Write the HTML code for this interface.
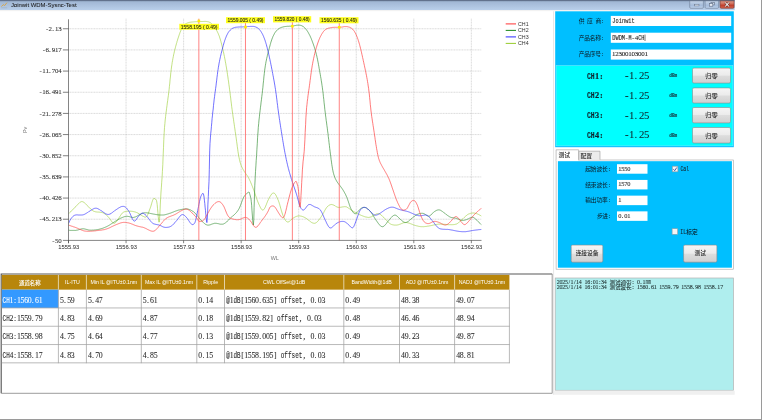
<!DOCTYPE html>
<html lang="zh-CN">
<head>
<meta charset="utf-8">
<title>Joinwit WDM-Sysnc-Test</title>
<style>
html,body{margin:0;padding:0;background:#fff;}
body{width:762px;height:420px;overflow:hidden;position:relative;}
svg{position:absolute;left:0;top:0;display:block;will-change:transform;}
text{font-family:"Liberation Sans","Noto Sans CJK SC",sans-serif;white-space:pre;}
text.m{font-family:"Liberation Mono","Noto Sans CJK SC",monospace;}
text.k{font-family:"Liberation Mono","Noto Sans CJK SC",monospace;}
text.c{font-family:"Liberation Serif","Noto Sans CJK SC",serif;}
</style>
</head>
<body>
<svg width="762" height="420" viewBox="0 0 762 420">
<defs>
<linearGradient id="gt" x1="0" y1="0" x2="0" y2="1"><stop offset="0" stop-color="#98aecb"/><stop offset="0.25" stop-color="#a3b9d6"/><stop offset="1" stop-color="#b9cfea"/></linearGradient>
<linearGradient id="gb" x1="0" y1="0" x2="0" y2="1"><stop offset="0" stop-color="#c6d6ea"/><stop offset="0.5" stop-color="#abc0dc"/><stop offset="0.52" stop-color="#a0b8d8"/><stop offset="1" stop-color="#bfd2ea"/></linearGradient>
<linearGradient id="gc" x1="0" y1="0" x2="0" y2="1"><stop offset="0" stop-color="#dd9c8c"/><stop offset="0.45" stop-color="#cd6552"/><stop offset="0.55" stop-color="#bf3c2a"/><stop offset="1" stop-color="#d2634e"/></linearGradient>
<linearGradient id="gbtn" x1="0" y1="0" x2="0" y2="1"><stop offset="0" stop-color="#f5f5f5"/><stop offset="0.48" stop-color="#ebebeb"/><stop offset="0.52" stop-color="#dddddd"/><stop offset="1" stop-color="#d0d0d0"/></linearGradient>
<clipPath id="cp"><rect x="68.5" y="18.7" width="413" height="221.7"/></clipPath>
</defs>
<rect x="0.00" y="0.00" width="762.00" height="420.00" fill="#ffffff" />
<path d="M761.50 0.00V420.00" stroke="#9a9a9a" stroke-width="1.00" />
<path d="M0.00 419.50H762.00" stroke="#9a9a9a" stroke-width="1.00" />
<rect x="0.00" y="0.00" width="734.70" height="10.00" fill="url(#gt)" />
<rect x="0.00" y="0.00" width="734.70" height="1.15" fill="#62728c" />
<rect x="0.00" y="10.00" width="734.70" height="1.20" fill="#f2f2f2" />
<path d="M1.4 6.6L3.2 4.6L4.6 5.6L7 2.6" stroke="#d9a441" stroke-width="0.9" fill="none"/><path d="M1.2 7.8H7.2" stroke="#9ab" stroke-width="0.5"/>
<text x="10.90" y="7.00" font-size="5.95" fill="#1a1a1a" stroke="#1a1a1a" stroke-width="0.05">Joinwit WDM-Sysnc-Test</text>
<path d="M689.70 0.9V7.2Q689.70 8.3 690.90 8.3H702.20Q703.40 8.3 703.40 7.2V0.9Z" fill="url(#gb)" stroke="#6c7c96" stroke-width="0.6"/>
<path d="M705.10 0.9V7.2Q705.10 8.3 706.30 8.3H717.40Q718.60 8.3 718.60 7.2V0.9Z" fill="url(#gb)" stroke="#6c7c96" stroke-width="0.6"/>
<path d="M720.10 0.9V7.2Q720.10 8.3 721.30 8.3H732.90Q734.10 8.3 734.10 7.2V0.9Z" fill="url(#gc)" stroke="#7a3a32" stroke-width="0.6"/>
<rect x="694.50" y="4.50" width="4.50" height="1.40" fill="#f0f3f8" stroke="#5a6880" stroke-width="0.45"/>
<rect x="711.00" y="2.30" width="3.40" height="2.60" fill="#d4deeb" stroke="#5e6c84" stroke-width="0.6"/>
<rect x="709.40" y="3.60" width="3.40" height="2.60" fill="#e6ecf4" stroke="#5e6c84" stroke-width="0.6"/>
<path d="M725.2 2.5L729 6.5M729 2.5L725.2 6.5" stroke="#6a2f28" stroke-width="1.9"/><path d="M725.2 2.5L729 6.5M729 2.5L725.2 6.5" stroke="#fff" stroke-width="1.05"/>
<path d="M553.60 11.20V394.80" stroke="#e6e6e6" stroke-width="1.00" />
<path d="M68.5 28.75H481.5M68.5 49.91H481.5M68.5 71.08H481.5M68.5 92.25H481.5M68.5 113.41H481.5M68.5 134.57H481.5M68.5 155.74H481.5M68.5 176.91H481.5M68.5 198.07H481.5M68.5 219.23H481.5M126.05 18.7V240.4M183.60 18.7V240.4M241.15 18.7V240.4M298.70 18.7V240.4M356.25 18.7V240.4M413.80 18.7V240.4M471.35 18.7V240.4" stroke="#bdbdbd" stroke-width="0.6" stroke-dasharray="1 0.6" fill="none"/>
<g fill="none" stroke-width="0.75" stroke-linejoin="round" clip-path="url(#cp)">
<path d="M68.6 213.7L69.0 213.4 69.3 213.0 69.7 212.7 70.0 212.3 70.4 212.0 70.7 211.6 71.1 211.3 71.4 210.9 71.8 210.6 72.1 210.2 72.5 209.9 72.8 209.5 73.2 209.2 73.5 208.8 73.9 208.5 74.2 208.1 74.6 207.8 74.9 207.4 75.3 207.1 75.6 206.7 76.0 206.4 76.3 206.0 76.7 205.6 77.0 205.2 77.4 204.8 77.7 204.5 78.1 204.1 78.4 203.7 78.8 203.4 79.1 203.1 79.5 202.8 79.8 202.5 80.2 202.2 80.5 202.0 80.9 201.9 81.2 201.7 81.6 201.6 81.9 201.6 82.3 201.6 82.6 201.7 83.0 201.8 83.3 202.0 83.7 202.2 84.0 202.4 84.4 202.7 84.7 203.0 85.1 203.3 85.4 203.7 85.8 204.0 86.1 204.4 86.5 204.7 86.8 205.1 87.2 205.5 87.5 205.8 87.9 206.1 88.2 206.5 88.6 206.9 88.9 207.2 89.3 207.6 89.6 207.9 90.0 208.3 90.3 208.6 90.7 209.0 91.0 209.3 91.4 209.6 91.7 209.9 92.1 210.2 92.4 210.5 92.8 210.7 93.1 210.9 93.5 211.1 93.8 211.3 94.2 211.4 94.5 211.5 94.9 211.6 95.2 211.7 95.6 211.8 95.9 211.9 96.3 211.9 96.6 212.0 97.0 212.0 97.3 212.0 97.7 212.1 98.0 212.1 98.4 212.1 98.7 212.1 99.1 212.2 99.4 212.2 99.8 212.2 100.1 212.3 100.5 212.3 100.8 212.3 101.2 212.4 101.5 212.5 101.9 212.5 102.2 212.6 102.6 212.7 102.9 212.8 103.3 213.0 103.6 213.1 104.0 213.3 104.3 213.5 104.7 213.8 105.0 214.0 105.4 214.3 105.7 214.5 106.1 214.8 106.4 215.1 106.8 215.4 107.1 215.8 107.5 216.1 107.8 216.5 108.2 216.8 108.5 217.2 108.9 217.6 109.2 218.1 109.6 218.5 109.9 219.0 110.3 219.5 110.6 220.0 111.0 220.5 111.3 221.0 111.7 221.5 112.0 221.9 112.4 222.3 112.7 222.6 113.1 222.9 113.4 223.1 113.8 223.2 114.1 223.3 114.5 223.2 114.8 223.1 115.2 222.9 115.5 222.6 115.9 222.2 116.2 221.8 116.6 221.4 116.9 220.9 117.3 220.4 117.6 219.9 118.0 219.3 118.3 218.8 118.7 218.3 119.0 217.8 119.4 217.3 119.7 216.7 120.1 216.2 120.4 215.7 120.8 215.1 121.1 214.6 121.5 214.2 121.8 213.7 122.2 213.3 122.5 212.9 122.9 212.6 123.2 212.3 123.6 212.1 123.9 212.0 124.3 211.8 124.6 211.7 125.0 211.6 125.3 211.5 125.7 211.5 126.0 211.4 126.4 211.4 126.7 211.3 127.1 211.3 127.4 211.2 127.8 211.2 128.1 211.2 128.5 211.2 128.8 211.2 129.2 211.2 129.5 211.2 129.9 211.2 130.2 211.2 130.6 211.2 130.9 211.3 131.3 211.3 131.6 211.3 132.0 211.4 132.3 211.4 132.7 211.4 133.0 211.5 133.4 211.6 133.7 211.6 134.1 211.7 134.4 211.8 134.8 211.9 135.1 212.0 135.5 212.1 135.8 212.2 136.2 212.3 136.5 212.5 136.9 212.6 137.2 212.8 137.6 212.9 137.9 213.1 138.3 213.3 138.6 213.5 139.0 213.7 139.3 214.0 139.7 214.2 140.0 214.4 140.4 214.7 140.7 214.9 141.1 215.1 141.4 215.4 141.8 215.6 142.1 215.8 142.5 216.0 142.8 216.2 143.2 216.3 143.5 216.5 143.9 216.7 144.2 216.8 144.6 217.0 144.9 217.1 145.3 217.1 145.6 217.1 146.0 217.1 146.3 216.9 146.7 216.5 147.0 216.1 147.4 215.5 147.7 214.7 148.1 213.8 148.4 212.9 148.8 212.0 149.1 211.0 149.5 210.0 149.8 209.1 150.2 208.2 150.5 207.2 150.9 206.2 151.2 205.0 151.6 203.8 151.9 202.6 152.3 201.4 152.6 200.4 153.0 199.6 153.3 199.1 153.7 198.5 154.0 198.1 154.4 198.3 154.7 198.8 155.1 199.0 155.4 199.2 155.8 199.6 156.1 199.6 156.5 200.5 156.8 202.0 157.2 204.6 157.5 208.3 157.9 212.4 158.2 216.3 158.6 219.6 158.9 222.2 159.3 222.0 159.6 218.3 160.0 211.6 160.3 204.1 160.7 197.5 161.0 192.0 161.4 187.1 161.7 182.3 162.1 177.2 162.4 171.5 162.8 164.6 163.1 156.4 163.5 147.7 163.8 139.5 164.2 132.7 164.5 127.5 164.9 123.5 165.2 120.0 165.6 116.7 165.9 113.7 166.3 111.0 166.6 108.4 167.0 105.7 167.3 103.1 167.7 100.6 168.0 98.0 168.4 95.4 168.7 92.7 169.1 89.7 169.4 86.5 169.8 83.1 170.1 79.5 170.5 76.0 170.8 72.6 171.2 69.7 171.5 67.0 171.9 64.7 172.2 62.4 172.6 60.4 172.9 58.5 173.3 56.6 173.6 54.9 174.0 53.3 174.3 51.8 174.7 50.4 175.0 49.0 175.4 47.6 175.7 46.3 176.1 45.0 176.4 43.7 176.8 42.5 177.1 41.3 177.5 40.2 177.8 39.0 178.2 37.9 178.5 36.9 178.9 35.8 179.2 34.8 179.6 33.8 179.9 32.8 180.3 31.9 180.6 31.0 181.0 30.2 181.3 29.4 181.7 28.7 182.0 28.1 182.4 27.5 182.7 27.0 183.1 26.5 183.4 26.0 183.8 25.6 184.1 25.2 184.5 24.8 184.8 24.5 185.2 24.2 185.5 24.0 185.9 23.7 186.2 23.5 186.6 23.3 186.9 23.2 187.3 23.0 187.6 22.9 188.0 22.8 188.3 22.7 188.7 22.6 189.0 22.5 189.4 22.4 189.7 22.3 190.1 22.3 190.4 22.2 190.8 22.2 191.1 22.1 191.5 22.1 191.8 22.0 192.2 22.0 192.5 22.0 192.9 21.9 193.2 21.9 193.6 21.9 193.9 21.8 194.3 21.8 194.6 21.8 195.0 21.8 195.3 21.8 195.7 21.7 196.0 21.7 196.4 21.7 196.7 21.7 197.1 21.7 197.4 21.7 197.8 21.6 198.1 21.6 198.5 21.6 198.8 21.6 199.2 21.6 199.5 21.6 199.9 21.6 200.2 21.6 200.6 21.5 200.9 21.5 201.3 21.5 201.6 21.5 202.0 21.5 202.3 21.5 202.7 21.5 203.0 21.5 203.4 21.5 203.7 21.4 204.1 21.4 204.4 21.4 204.8 21.4 205.1 21.4 205.5 21.4 205.8 21.4 206.2 21.5 206.5 21.5 206.9 21.5 207.2 21.6 207.6 21.7 207.9 21.7 208.3 21.8 208.6 21.9 209.0 22.0 209.3 22.2 209.7 22.3 210.0 22.5 210.4 22.7 210.7 23.0 211.1 23.3 211.4 23.6 211.8 23.9 212.1 24.3 212.5 24.7 212.8 25.1 213.2 25.5 213.5 26.0 213.9 26.4 214.2 26.9 214.6 27.3 214.9 27.8 215.3 28.3 215.6 28.8 216.0 29.3 216.3 29.9 216.7 30.5 217.0 31.1 217.4 31.8 217.7 32.5 218.1 33.3 218.4 34.1 218.8 34.9 219.1 35.8 219.5 36.8 219.8 37.9 220.2 39.0 220.5 40.2 220.9 41.4 221.2 42.7 221.6 44.1 221.9 45.5 222.3 46.9 222.6 48.3 223.0 49.8 223.3 51.4 223.7 53.0 224.0 54.7 224.4 56.4 224.7 58.1 225.1 60.0 225.4 61.9 225.8 63.8 226.1 65.8 226.5 67.9 226.8 70.0 227.2 72.3 227.5 74.6 227.9 77.0 228.2 79.4 228.6 81.9 228.9 84.5 229.3 87.1 229.6 89.8 230.0 92.5 230.3 95.3 230.7 98.1 231.0 101.0 231.4 103.9 231.7 106.7 232.1 109.4 232.4 112.0 232.8 114.6 233.1 117.0 233.5 119.4 233.8 121.8 234.2 124.2 234.5 126.6 234.9 129.0 235.2 131.4 235.6 133.9 235.9 136.3 236.3 138.8 236.6 141.4 237.0 144.0 237.3 146.6 237.7 149.2 238.0 151.7 238.4 154.0 238.7 156.0 239.1 157.8 239.4 159.4 239.8 160.9 240.1 162.2 240.5 163.4 240.8 164.5 241.2 165.4 241.5 166.3 241.9 167.1 242.2 167.8 242.6 168.5 242.9 169.1 243.3 169.8 243.6 170.3 244.0 170.9 244.3 171.5 244.7 172.0 245.0 172.5 245.4 173.0 245.7 173.5 246.1 174.0 246.4 174.5 246.8 175.0 247.1 175.5 247.5 176.0 247.8 176.6 248.2 177.2 248.5 177.8 248.9 178.5 249.2 179.2 249.6 179.9 249.9 180.6 250.3 181.4 250.6 182.2 251.0 183.0 251.3 183.9 251.7 184.7 252.0 185.6 252.4 186.5 252.7 187.4 253.1 188.3 253.4 189.3 253.8 190.2 254.1 191.1 254.5 192.1 254.8 193.1 255.2 194.2 255.5 195.2 255.9 196.2 256.2 197.3 256.6 198.3 256.9 199.3 257.3 200.3 257.6 201.2 258.0 202.1 258.3 203.0 258.7 203.8 259.0 204.6 259.4 205.3 259.7 206.1 260.1 206.8 260.4 207.5 260.8 208.1 261.1 208.7 261.5 209.2 261.8 209.6 262.2 209.8 262.5 210.0 262.9 210.1 263.2 210.0 263.6 209.7 263.9 209.4 264.3 208.9 264.6 208.3 265.0 207.6 265.3 206.9 265.7 206.1 266.0 205.2 266.4 204.4 266.7 203.5 267.1 202.6 267.4 201.7 267.8 200.9 268.1 200.1 268.5 199.4 268.8 198.7 269.2 198.1 269.5 197.4 269.9 196.8 270.2 196.2 270.6 195.6 270.9 195.1 271.3 194.6 271.6 194.1 272.0 193.8 272.3 193.4 272.7 193.2 273.0 193.0 273.4 193.0 273.7 193.0 274.1 193.1 274.4 193.3 274.8 193.6 275.1 194.0 275.5 194.5 275.8 195.0 276.2 195.7 276.5 196.4 276.9 197.1 277.2 197.9 277.6 198.7 277.9 199.6 278.3 200.4 278.6 201.3 279.0 202.3 279.3 203.4 279.7 204.5 280.0 205.7 280.4 207.0 280.7 208.2 281.1 209.5 281.4 210.7 281.8 211.9 282.1 213.0 282.5 214.1 282.8 215.1 283.2 215.9 283.5 216.7 283.9 217.4 284.2 218.1 284.6 218.8 284.9 219.4 285.3 220.0 285.6 220.5 286.0 220.9 286.3 221.3 286.7 221.6 287.0 221.8 287.4 221.9 287.7 222.0 288.1 222.0 288.4 221.9 288.8 221.7 289.1 221.5 289.5 221.3 289.8 221.0 290.2 220.7 290.5 220.3 290.9 220.0 291.2 219.7 291.6 219.3 291.9 219.0 292.3 218.8 292.6 218.5 293.0 218.2 293.3 218.0 293.7 217.8 294.0 217.6 294.4 217.4 294.7 217.2 295.1 217.0 295.4 216.8 295.8 216.7 296.1 216.5 296.5 216.4 296.8 216.3 297.2 216.2 297.5 216.1 297.9 216.0 298.2 216.0 298.6 215.9 298.9 215.9 299.3 215.9 299.6 215.9 300.0 216.0 300.3 216.0 300.7 216.1 301.0 216.1 301.4 216.2 301.7 216.3 302.1 216.4 302.4 216.5 302.8 216.7 303.1 216.8 303.5 216.9 303.8 217.1 304.2 217.2 304.5 217.4 304.9 217.6 305.2 217.8 305.6 218.0 305.9 218.2 306.3 218.4 306.6 218.7 307.0 218.9 307.3 219.2 307.7 219.5 308.0 219.7 308.4 220.0 308.7 220.3 309.1 220.6 309.4 220.9 309.8 221.2 310.1 221.4 310.5 221.7 310.8 221.9 311.2 222.2 311.5 222.4 311.9 222.6 312.2 222.8 312.6 222.9 312.9 223.1 313.3 223.2 313.6 223.2 314.0 223.3 314.3 223.3 314.7 223.3 315.0 223.2 315.4 223.1 315.7 222.9 316.1 222.7 316.4 222.5 316.8 222.2 317.1 221.9 317.5 221.6 317.8 221.2 318.2 220.8 318.5 220.4 318.9 220.0 319.2 219.5 319.6 219.1 319.9 218.6 320.3 218.1 320.6 217.6 321.0 217.1 321.3 216.6 321.7 216.1 322.0 215.5 322.4 214.9 322.7 214.3 323.1 213.7 323.4 213.0 323.8 212.4 324.1 211.7 324.5 211.0 324.8 210.4 325.2 209.8 325.5 209.2 325.9 208.6 326.2 208.0 326.6 207.6 326.9 207.1 327.3 206.7 327.6 206.4 328.0 206.1 328.3 205.8 328.7 205.6 329.0 205.3 329.4 205.1 329.7 205.0 330.1 204.8 330.4 204.7 330.8 204.6 331.1 204.5 331.5 204.5 331.8 204.5 332.2 204.6 332.5 204.7 332.9 204.8 333.2 204.9 333.6 205.1 333.9 205.2 334.3 205.4 334.6 205.6 335.0 205.8 335.3 206.1 335.7 206.3 336.0 206.5 336.4 206.7 336.7 206.8 337.1 207.0 337.4 207.1 337.8 207.3 338.1 207.3 338.5 207.4 338.8 207.4 339.2 207.4 339.5 207.4 339.9 207.4 340.2 207.3 340.6 207.3 340.9 207.2 341.3 207.2 341.6 207.1 342.0 207.1 342.3 207.0 342.7 206.9 343.0 206.9 343.4 206.8 343.7 206.8 344.1 206.7 344.4 206.7 344.8 206.7 345.1 206.7 345.5 206.7 345.8 206.8 346.2 206.8 346.5 206.9 346.9 207.1 347.2 207.3 347.6 207.5 347.9 207.7 348.3 207.9 348.6 208.2 349.0 208.4 349.3 208.7 349.7 209.0 350.0 209.2 350.4 209.5 350.7 209.7 351.1 210.0 351.4 210.2 351.8 210.4 352.1 210.6 352.5 210.8 352.8 211.1 353.2 211.3 353.5 211.5 353.9 211.7 354.2 211.9 354.6 212.1 354.9 212.3 355.3 212.5 355.6 212.7 356.0 212.8 356.3 213.0 356.7 213.2 357.0 213.4 357.4 213.6 357.7 213.7 358.1 213.9 358.4 214.1 358.8 214.2 359.1 214.4 359.5 214.6 359.8 214.7 360.2 214.9 360.5 215.0 360.9 215.2 361.2 215.3 361.6 215.5 361.9 215.6 362.3 215.8 362.6 215.9 363.0 216.1 363.3 216.2 363.7 216.3 364.0 216.4 364.4 216.6 364.7 216.7 365.1 216.8 365.4 216.9 365.8 217.0 366.1 217.1 366.5 217.1 366.8 217.2 367.2 217.3 367.5 217.3 367.9 217.3 368.2 217.4 368.6 217.4 368.9 217.4 369.3 217.3 369.6 217.3 370.0 217.2 370.3 217.1 370.7 217.0 371.0 216.9 371.4 216.8 371.7 216.6 372.1 216.4 372.4 216.2 372.8 216.0 373.1 215.8 373.5 215.6 373.8 215.4 374.2 215.2 374.5 215.0 374.9 214.7 375.2 214.6 375.6 214.4 375.9 214.2 376.3 214.0 376.6 213.9 377.0 213.8 377.3 213.7 377.7 213.7 378.0 213.7 378.4 213.7 378.7 213.7 379.1 213.8 379.4 214.0 379.8 214.1 380.1 214.3 380.5 214.5 380.8 214.8 381.2 215.1 381.5 215.4 381.9 215.7 382.2 216.0 382.6 216.3 382.9 216.7 383.3 217.0 383.6 217.4 384.0 217.7 384.3 218.0 384.7 218.4 385.0 218.7 385.4 219.1 385.7 219.5 386.1 219.8 386.4 220.2 386.8 220.6 387.1 221.0 387.5 221.4 387.8 221.7 388.2 222.1 388.5 222.4 388.9 222.8 389.2 223.1 389.6 223.4 389.9 223.6 390.3 223.9 390.6 224.0 391.0 224.2 391.3 224.4 391.7 224.5 392.0 224.6 392.4 224.7 392.7 224.8 393.1 224.9 393.4 224.9 393.8 225.0 394.1 225.0 394.5 225.1 394.8 225.1 395.2 225.1 395.5 225.1 395.9 225.1 396.2 225.1 396.6 225.1 396.9 225.0 397.3 225.0 397.6 224.9 398.0 224.9 398.3 224.8 398.7 224.7 399.0 224.6 399.4 224.4 399.7 224.3 400.1 224.2 400.4 224.0 400.8 223.9 401.1 223.7 401.5 223.6 401.8 223.5 402.2 223.3 402.5 223.2 402.9 223.1 403.2 222.9 403.6 222.8 403.9 222.7 404.3 222.7 404.6 222.6 405.0 222.5 405.3 222.5 405.7 222.5 406.0 222.5 406.4 222.5 406.7 222.6 407.1 222.6 407.4 222.7 407.8 222.8 408.1 222.8 408.5 223.0 408.8 223.1 409.2 223.2 409.5 223.3 409.9 223.4 410.2 223.6 410.6 223.7 410.9 223.8 411.3 224.0 411.6 224.1 412.0 224.3 412.3 224.4 412.7 224.5 413.0 224.7 413.4 224.8 413.7 224.9 414.1 225.0 414.4 225.2 414.8 225.3 415.1 225.4 415.5 225.5 415.8 225.6 416.2 225.7 416.5 225.8 416.9 225.9 417.2 226.0 417.6 226.0 417.9 226.1 418.3 226.2 418.6 226.3 419.0 226.3 419.3 226.4 419.7 226.5 420.0 226.5 420.4 226.6 420.7 226.6 421.1 226.6 421.4 226.7 421.8 226.7 422.1 226.7 422.5 226.7 422.8 226.7 423.2 226.7 423.5 226.7 423.9 226.7 424.2 226.6 424.6 226.6 424.9 226.6 425.3 226.5 425.6 226.5 426.0 226.5 426.3 226.4 426.7 226.4 427.0 226.3 427.4 226.2 427.7 226.2 428.1 226.1 428.4 226.1 428.8 226.0 429.1 225.9 429.5 225.9 429.8 225.8 430.2 225.8 430.5 225.7 430.9 225.6 431.2 225.6 431.6 225.5 431.9 225.4 432.3 225.3 432.6 225.3 433.0 225.2 433.3 225.1 433.7 225.0 434.0 225.0 434.4 224.9 434.7 224.8 435.1 224.7 435.4 224.7 435.8 224.6 436.1 224.5 436.5 224.5 436.8 224.4 437.2 224.4 437.5 224.3 437.9 224.3 438.2 224.2 438.6 224.2 438.9 224.2 439.3 224.2 439.6 224.2 440.0 224.2 440.3 224.1 440.7 224.1 441.0 224.2 441.4 224.2 441.7 224.2 442.1 224.2 442.4 224.2 442.8 224.2 443.1 224.2 443.5 224.3 443.8 224.3 444.2 224.3 444.5 224.3 444.9 224.4 445.2 224.4 445.6 224.4 445.9 224.5 446.3 224.5 446.6 224.5 447.0 224.5 447.3 224.6 447.7 224.6 448.0 224.6 448.4 224.7 448.7 224.7 449.1 224.7 449.4 224.7 449.8 224.7 450.1 224.7 450.5 224.7 450.8 224.7 451.2 224.7 451.5 224.7 451.9 224.7 452.2 224.7 452.6 224.7 452.9 224.7 453.3 224.7 453.6 224.6 454.0 224.6 454.3 224.5 454.7 224.5 455.0 224.4 455.4 224.3 455.7 224.2 456.1 224.1 456.4 224.0 456.8 223.9 457.1 223.7 457.5 223.5 457.8 223.2 458.2 223.0 458.5 222.7 458.9 222.4 459.2 222.1 459.6 221.8 459.9 221.5 460.3 221.2 460.6 220.9 461.0 220.5 461.3 220.2 461.7 219.9 462.0 219.6 462.4 219.3 462.7 218.9 463.1 218.6 463.4 218.3 463.8 217.9 464.1 217.6 464.5 217.3 464.8 216.9 465.2 216.6 465.5 216.3 465.9 216.0 466.2 215.7 466.6 215.4 466.9 215.1 467.3 214.8 467.6 214.6 468.0 214.4 468.3 214.2 468.7 214.0 469.0 213.9 469.4 213.8 469.7 213.6 470.1 213.5 470.4 213.4 470.8 213.3 471.1 213.2 471.5 213.2 471.8 213.1 472.2 213.1 472.5 213.0 472.9 213.0 473.2 213.0 473.6 213.0 473.9 213.1 474.3 213.1 474.6 213.1 475.0 213.2 475.3 213.3 475.7 213.4 476.0 213.4 476.4 213.6 476.7 213.7 477.1 213.8 477.4 213.9 477.8 214.1 478.1 214.2 478.5 214.4 478.8 214.6 479.2 214.8 479.5 214.9 479.9 215.1 480.2 215.4 480.6 215.6 480.9 215.8 481.3 216.0 481.6 216.2" stroke="#9acd32" opacity="0.8"/>
<path d="M68.6 230.3L69.0 230.3 69.3 230.3 69.7 230.3 70.0 230.3 70.4 230.4 70.7 230.4 71.1 230.4 71.4 230.4 71.8 230.4 72.1 230.4 72.5 230.4 72.8 230.4 73.2 230.4 73.5 230.4 73.9 230.4 74.2 230.4 74.6 230.4 74.9 230.4 75.3 230.4 75.6 230.4 76.0 230.3 76.3 230.3 76.7 230.2 77.0 230.2 77.4 230.1 77.7 230.0 78.1 229.9 78.4 229.8 78.8 229.7 79.1 229.6 79.5 229.5 79.8 229.4 80.2 229.3 80.5 229.2 80.9 229.1 81.2 229.0 81.6 228.9 81.9 228.9 82.3 228.8 82.6 228.8 83.0 228.8 83.3 228.8 83.7 228.8 84.0 228.9 84.4 228.9 84.7 229.0 85.1 229.1 85.4 229.2 85.8 229.2 86.1 229.3 86.5 229.4 86.8 229.5 87.2 229.6 87.5 229.7 87.9 229.8 88.2 229.9 88.6 230.0 88.9 230.0 89.3 230.1 89.6 230.1 90.0 230.1 90.3 230.1 90.7 230.2 91.0 230.2 91.4 230.2 91.7 230.2 92.1 230.2 92.4 230.1 92.8 230.1 93.1 230.1 93.5 230.1 93.8 230.1 94.2 230.0 94.5 230.0 94.9 229.9 95.2 229.9 95.6 229.9 95.9 229.8 96.3 229.8 96.6 229.7 97.0 229.7 97.3 229.6 97.7 229.6 98.0 229.5 98.4 229.4 98.7 229.4 99.1 229.3 99.4 229.2 99.8 229.1 100.1 229.0 100.5 228.9 100.8 228.8 101.2 228.7 101.5 228.6 101.9 228.5 102.2 228.4 102.6 228.3 102.9 228.1 103.3 228.0 103.6 227.9 104.0 227.8 104.3 227.6 104.7 227.5 105.0 227.3 105.4 227.2 105.7 227.0 106.1 226.9 106.4 226.7 106.8 226.6 107.1 226.4 107.5 226.2 107.8 226.0 108.2 225.8 108.5 225.6 108.9 225.4 109.2 225.2 109.6 225.0 109.9 224.8 110.3 224.5 110.6 224.3 111.0 224.1 111.3 223.9 111.7 223.6 112.0 223.4 112.4 223.2 112.7 223.0 113.1 222.7 113.4 222.5 113.8 222.3 114.1 222.1 114.5 221.8 114.8 221.6 115.2 221.4 115.5 221.2 115.9 221.0 116.2 220.8 116.6 220.5 116.9 220.3 117.3 220.1 117.6 219.9 118.0 219.7 118.3 219.5 118.7 219.3 119.0 219.1 119.4 218.9 119.7 218.7 120.1 218.5 120.4 218.3 120.8 218.1 121.1 218.0 121.5 217.8 121.8 217.7 122.2 217.5 122.5 217.4 122.9 217.2 123.2 217.1 123.6 217.0 123.9 216.9 124.3 216.8 124.6 216.6 125.0 216.6 125.3 216.5 125.7 216.4 126.0 216.4 126.4 216.3 126.7 216.3 127.1 216.3 127.4 216.3 127.8 216.4 128.1 216.4 128.5 216.5 128.8 216.5 129.2 216.6 129.5 216.7 129.9 216.8 130.2 216.9 130.6 217.0 130.9 217.1 131.3 217.2 131.6 217.2 132.0 217.3 132.3 217.4 132.7 217.4 133.0 217.4 133.4 217.4 133.7 217.4 134.1 217.3 134.4 217.2 134.8 217.1 135.1 217.0 135.5 216.9 135.8 216.7 136.2 216.5 136.5 216.4 136.9 216.2 137.2 216.0 137.6 215.8 137.9 215.6 138.3 215.4 138.6 215.2 139.0 215.0 139.3 214.8 139.7 214.7 140.0 214.5 140.4 214.3 140.7 214.1 141.1 213.9 141.4 213.8 141.8 213.6 142.1 213.5 142.5 213.3 142.8 213.2 143.2 213.1 143.5 213.0 143.9 212.9 144.2 212.8 144.6 212.8 144.9 212.8 145.3 212.8 145.6 212.8 146.0 212.8 146.3 212.8 146.7 212.8 147.0 212.9 147.4 212.9 147.7 212.9 148.1 213.0 148.4 213.1 148.8 213.1 149.1 213.2 149.5 213.2 149.8 213.3 150.2 213.4 150.5 213.5 150.9 213.5 151.2 213.6 151.6 213.7 151.9 213.7 152.3 213.8 152.6 213.9 153.0 213.9 153.3 214.0 153.7 214.1 154.0 214.1 154.4 214.2 154.7 214.3 155.1 214.3 155.4 214.4 155.8 214.5 156.1 214.5 156.5 214.6 156.8 214.6 157.2 214.7 157.5 214.7 157.9 214.8 158.2 214.8 158.6 214.9 158.9 214.9 159.3 214.9 159.6 215.0 160.0 215.0 160.3 215.0 160.7 215.0 161.0 215.0 161.4 215.0 161.7 215.0 162.1 215.0 162.4 215.0 162.8 215.0 163.1 215.0 163.5 215.0 163.8 214.9 164.2 214.9 164.5 214.8 164.9 214.8 165.2 214.7 165.6 214.6 165.9 214.5 166.3 214.4 166.6 214.3 167.0 214.2 167.3 214.1 167.7 214.0 168.0 213.9 168.4 213.8 168.7 213.7 169.1 213.6 169.4 213.4 169.8 213.3 170.1 213.2 170.5 213.1 170.8 213.0 171.2 212.8 171.5 212.7 171.9 212.6 172.2 212.4 172.6 212.3 172.9 212.2 173.3 212.0 173.6 211.9 174.0 211.7 174.3 211.6 174.7 211.4 175.0 211.3 175.4 211.2 175.7 211.0 176.1 210.9 176.4 210.8 176.8 210.7 177.1 210.6 177.5 210.4 177.8 210.3 178.2 210.2 178.5 210.1 178.9 210.0 179.2 210.0 179.6 209.9 179.9 209.8 180.3 209.7 180.6 209.6 181.0 209.5 181.3 209.5 181.7 209.4 182.0 209.3 182.4 209.3 182.7 209.2 183.1 209.1 183.4 209.1 183.8 209.1 184.1 209.0 184.5 209.0 184.8 209.0 185.2 208.9 185.5 208.9 185.9 208.9 186.2 208.9 186.6 208.9 186.9 209.0 187.3 209.0 187.6 209.0 188.0 209.1 188.3 209.2 188.7 209.3 189.0 209.4 189.4 209.5 189.7 209.6 190.1 209.8 190.4 209.9 190.8 210.1 191.1 210.3 191.5 210.5 191.8 210.7 192.2 210.9 192.5 211.1 192.9 211.3 193.2 211.6 193.6 211.8 193.9 212.1 194.3 212.4 194.6 212.7 195.0 213.0 195.3 213.4 195.7 213.8 196.0 214.2 196.4 214.6 196.7 215.0 197.1 215.4 197.4 215.9 197.8 216.3 198.1 216.8 198.5 217.2 198.8 217.6 199.2 218.1 199.5 218.5 199.9 218.9 200.2 219.3 200.6 219.7 200.9 220.1 201.3 220.4 201.6 220.8 202.0 221.2 202.3 221.5 202.7 221.9 203.0 222.2 203.4 222.6 203.7 222.9 204.1 223.2 204.4 223.5 204.8 223.8 205.1 224.0 205.5 224.3 205.8 224.5 206.2 224.6 206.5 224.8 206.9 224.9 207.2 225.0 207.6 225.1 207.9 225.1 208.3 225.1 208.6 225.1 209.0 225.0 209.3 225.0 209.7 224.9 210.0 224.8 210.4 224.7 210.7 224.6 211.1 224.4 211.4 224.3 211.8 224.2 212.1 224.1 212.5 223.9 212.8 223.8 213.2 223.7 213.5 223.6 213.9 223.5 214.2 223.4 214.6 223.3 214.9 223.3 215.3 223.3 215.6 223.3 216.0 223.3 216.3 223.3 216.7 223.4 217.0 223.4 217.4 223.5 217.7 223.6 218.1 223.6 218.4 223.7 218.8 223.8 219.1 223.9 219.5 224.0 219.8 224.0 220.2 224.1 220.5 224.2 220.9 224.2 221.2 224.2 221.6 224.2 221.9 224.2 222.3 224.2 222.6 224.2 223.0 224.1 223.3 224.0 223.7 223.9 224.0 223.7 224.4 223.5 224.7 223.3 225.1 223.1 225.4 222.9 225.8 222.6 226.1 222.3 226.5 222.0 226.8 221.7 227.2 221.4 227.5 221.0 227.9 220.7 228.2 220.3 228.6 220.0 228.9 219.6 229.3 219.2 229.6 218.9 230.0 218.5 230.3 218.2 230.7 217.8 231.0 217.5 231.4 217.2 231.7 216.9 232.1 216.6 232.4 216.3 232.8 216.0 233.1 215.7 233.5 215.4 233.8 215.1 234.2 214.8 234.5 214.5 234.9 214.1 235.2 213.8 235.6 213.4 235.9 213.1 236.3 212.7 236.6 212.3 237.0 211.8 237.3 211.4 237.7 210.9 238.0 210.4 238.4 209.8 238.7 209.2 239.1 208.6 239.4 207.9 239.8 207.1 240.1 206.3 240.5 205.4 240.8 204.5 241.2 203.5 241.5 202.6 241.9 201.6 242.2 200.7 242.6 199.8 242.9 198.9 243.3 198.1 243.6 197.3 244.0 196.7 244.3 196.1 244.7 195.6 245.0 195.2 245.4 194.9 245.7 194.5 246.1 194.2 246.4 193.8 246.8 193.5 247.1 193.2 247.5 192.9 247.8 192.7 248.2 192.5 248.5 192.2 248.9 191.9 249.2 192.2 249.6 193.5 249.9 194.6 250.3 196.0 250.6 197.5 251.0 198.9 251.3 201.7 251.7 205.7 252.0 210.8 252.4 216.0 252.7 220.6 253.1 223.9 253.4 225.0 253.8 219.6 254.1 207.5 254.5 195.0 254.8 185.3 255.2 177.9 255.5 171.6 255.9 165.9 256.2 160.6 256.6 155.3 256.9 149.5 257.3 143.3 257.6 137.3 258.0 132.0 258.3 127.4 258.7 123.5 259.0 120.0 259.4 116.8 259.7 113.7 260.1 110.7 260.4 107.8 260.8 105.0 261.1 102.1 261.5 99.3 261.8 96.5 262.2 93.6 262.5 90.5 262.9 87.3 263.2 83.9 263.6 80.4 263.9 76.9 264.3 73.6 264.6 70.6 265.0 68.0 265.3 65.8 265.7 63.7 266.0 61.8 266.4 60.1 266.7 58.4 267.1 56.9 267.4 55.4 267.8 54.0 268.1 52.6 268.5 51.3 268.8 50.0 269.2 48.6 269.5 47.3 269.9 46.0 270.2 44.7 270.6 43.4 270.9 42.2 271.3 41.1 271.6 40.0 272.0 39.1 272.3 38.1 272.7 37.3 273.0 36.4 273.4 35.7 273.7 35.0 274.1 34.3 274.4 33.6 274.8 33.0 275.1 32.5 275.5 32.0 275.8 31.5 276.2 31.1 276.5 30.7 276.9 30.4 277.2 30.0 277.6 29.7 277.9 29.4 278.3 29.1 278.6 28.9 279.0 28.6 279.3 28.4 279.7 28.2 280.0 28.0 280.4 27.8 280.7 27.7 281.1 27.5 281.4 27.4 281.8 27.3 282.1 27.2 282.5 27.1 282.8 27.0 283.2 26.9 283.5 26.8 283.9 26.8 284.2 26.7 284.6 26.6 284.9 26.6 285.3 26.5 285.6 26.5 286.0 26.5 286.3 26.4 286.7 26.4 287.0 26.4 287.4 26.3 287.7 26.3 288.1 26.3 288.4 26.3 288.8 26.3 289.1 26.3 289.5 26.2 289.8 26.2 290.2 26.2 290.5 26.2 290.9 26.2 291.2 26.1 291.6 26.1 291.9 26.1 292.3 26.0 292.6 26.0 293.0 25.9 293.3 25.9 293.7 25.8 294.0 25.7 294.4 25.7 294.7 25.6 295.1 25.5 295.4 25.5 295.8 25.4 296.1 25.3 296.5 25.3 296.8 25.2 297.2 25.2 297.5 25.2 297.9 25.1 298.2 25.1 298.6 25.1 298.9 25.1 299.3 25.1 299.6 25.2 300.0 25.2 300.3 25.3 300.7 25.4 301.0 25.5 301.4 25.6 301.7 25.7 302.1 25.9 302.4 26.1 302.8 26.3 303.1 26.5 303.5 26.7 303.8 27.0 304.2 27.3 304.5 27.7 304.9 28.0 305.2 28.4 305.6 28.8 305.9 29.2 306.3 29.6 306.6 30.1 307.0 30.6 307.3 31.1 307.7 31.6 308.0 32.2 308.4 32.7 308.7 33.4 309.1 34.0 309.4 34.7 309.8 35.4 310.1 36.1 310.5 36.9 310.8 37.7 311.2 38.5 311.5 39.4 311.9 40.3 312.2 41.2 312.6 42.2 312.9 43.1 313.3 44.1 313.6 45.1 314.0 46.2 314.3 47.2 314.7 48.3 315.0 49.5 315.4 50.7 315.7 51.9 316.1 53.2 316.4 54.6 316.8 56.1 317.1 57.6 317.5 59.2 317.8 61.0 318.2 62.8 318.5 64.7 318.9 66.7 319.2 68.7 319.6 70.6 319.9 72.6 320.3 74.6 320.6 76.6 321.0 78.7 321.3 80.8 321.7 83.0 322.0 85.3 322.4 87.8 322.7 90.4 323.1 93.2 323.4 96.3 323.8 99.5 324.1 102.8 324.5 106.1 324.8 109.3 325.2 112.2 325.5 115.0 325.9 117.8 326.2 120.4 326.6 123.0 326.9 125.6 327.3 128.2 327.6 130.9 328.0 133.7 328.3 136.6 328.7 139.5 329.0 142.5 329.4 145.5 329.7 148.5 330.1 151.3 330.4 154.1 330.8 156.8 331.1 159.5 331.5 162.1 331.8 164.5 332.2 166.8 332.5 168.8 332.9 170.7 333.2 172.2 333.6 173.6 333.9 174.8 334.3 175.9 334.6 176.9 335.0 177.8 335.3 178.6 335.7 179.3 336.0 180.0 336.4 180.6 336.7 181.2 337.1 181.8 337.4 182.3 337.8 182.9 338.1 183.3 338.5 183.8 338.8 184.3 339.2 184.7 339.5 185.2 339.9 185.6 340.2 186.1 340.6 186.5 340.9 187.0 341.3 187.5 341.6 188.0 342.0 188.5 342.3 189.0 342.7 189.5 343.0 190.1 343.4 190.6 343.7 191.2 344.1 191.8 344.4 192.4 344.8 193.1 345.1 193.7 345.5 194.4 345.8 195.1 346.2 195.9 346.5 196.7 346.9 197.5 347.2 198.4 347.6 199.4 347.9 200.4 348.3 201.4 348.6 202.5 349.0 203.5 349.3 204.6 349.7 205.6 350.0 206.6 350.4 207.5 350.7 208.3 351.1 209.0 351.4 209.7 351.8 210.3 352.1 210.9 352.5 211.5 352.8 212.0 353.2 212.4 353.5 212.8 353.9 213.1 354.2 213.4 354.6 213.6 354.9 213.7 355.3 213.7 355.6 213.6 356.0 213.4 356.3 213.2 356.7 212.9 357.0 212.6 357.4 212.2 357.7 211.8 358.1 211.4 358.4 211.0 358.8 210.5 359.1 210.1 359.5 209.7 359.8 209.4 360.2 209.1 360.5 208.8 360.9 208.5 361.2 208.3 361.6 208.1 361.9 207.9 362.3 207.8 362.6 207.6 363.0 207.5 363.3 207.5 363.7 207.4 364.0 207.4 364.4 207.4 364.7 207.4 365.1 207.4 365.4 207.5 365.8 207.7 366.1 207.8 366.5 208.0 366.8 208.2 367.2 208.5 367.5 208.7 367.9 209.0 368.2 209.3 368.6 209.6 368.9 210.0 369.3 210.3 369.6 210.7 370.0 211.0 370.3 211.4 370.7 211.9 371.0 212.3 371.4 212.8 371.7 213.3 372.1 213.9 372.4 214.4 372.8 215.0 373.1 215.5 373.5 216.1 373.8 216.7 374.2 217.3 374.5 217.8 374.9 218.4 375.2 219.0 375.6 219.5 375.9 220.0 376.3 220.5 376.6 221.0 377.0 221.5 377.3 222.0 377.7 222.5 378.0 223.0 378.4 223.5 378.7 223.9 379.1 224.4 379.4 224.8 379.8 225.2 380.1 225.5 380.5 225.8 380.8 226.1 381.2 226.3 381.5 226.5 381.9 226.6 382.2 226.7 382.6 226.7 382.9 226.6 383.3 226.5 383.6 226.3 384.0 226.1 384.3 225.8 384.7 225.5 385.0 225.1 385.4 224.7 385.7 224.3 386.1 223.9 386.4 223.4 386.8 223.0 387.1 222.5 387.5 222.0 387.8 221.6 388.2 221.1 388.5 220.7 388.9 220.3 389.2 219.9 389.6 219.5 389.9 219.0 390.3 218.6 390.6 218.2 391.0 217.8 391.3 217.4 391.7 217.1 392.0 216.7 392.4 216.4 392.7 216.1 393.1 215.8 393.4 215.6 393.8 215.4 394.1 215.3 394.5 215.2 394.8 215.1 395.2 215.2 395.5 215.2 395.9 215.4 396.2 215.5 396.6 215.8 396.9 216.0 397.3 216.3 397.6 216.6 398.0 217.0 398.3 217.3 398.7 217.7 399.0 218.1 399.4 218.4 399.7 218.8 400.1 219.1 400.4 219.4 400.8 219.7 401.1 220.0 401.5 220.3 401.8 220.6 402.2 220.9 402.5 221.2 402.9 221.5 403.2 221.7 403.6 221.9 403.9 222.1 404.3 222.2 404.6 222.4 405.0 222.4 405.3 222.5 405.7 222.5 406.0 222.4 406.4 222.4 406.7 222.2 407.1 222.1 407.4 221.9 407.8 221.7 408.1 221.4 408.5 221.2 408.8 220.9 409.2 220.6 409.5 220.3 409.9 220.0 410.2 219.7 410.6 219.4 410.9 219.1 411.3 218.8 411.6 218.5 412.0 218.2 412.3 217.9 412.7 217.7 413.0 217.4 413.4 217.1 413.7 216.8 414.1 216.6 414.4 216.3 414.8 216.0 415.1 215.8 415.5 215.5 415.8 215.3 416.2 215.1 416.5 214.9 416.9 214.7 417.2 214.5 417.6 214.3 417.9 214.2 418.3 214.1 418.6 213.9 419.0 213.8 419.3 213.7 419.7 213.6 420.0 213.6 420.4 213.5 420.7 213.4 421.1 213.4 421.4 213.3 421.8 213.3 422.1 213.3 422.5 213.3 422.8 213.4 423.2 213.4 423.5 213.5 423.9 213.6 424.2 213.8 424.6 214.0 424.9 214.2 425.3 214.4 425.6 214.7 426.0 215.0 426.3 215.2 426.7 215.5 427.0 215.7 427.4 215.9 427.7 216.0 428.1 216.1 428.4 216.2 428.8 216.2 429.1 216.1 429.5 216.0 429.8 215.8 430.2 215.6 430.5 215.3 430.9 215.0 431.2 214.6 431.6 214.3 431.9 213.9 432.3 213.5 432.6 213.2 433.0 212.8 433.3 212.5 433.7 212.2 434.0 211.9 434.4 211.7 434.7 211.4 435.1 211.2 435.4 211.0 435.8 210.8 436.1 210.6 436.5 210.4 436.8 210.3 437.2 210.2 437.5 210.0 437.9 210.0 438.2 209.9 438.6 209.9 438.9 209.9 439.3 209.9 439.6 210.0 440.0 210.1 440.3 210.2 440.7 210.4 441.0 210.6 441.4 210.8 441.7 211.0 442.1 211.2 442.4 211.5 442.8 211.8 443.1 212.0 443.5 212.3 443.8 212.6 444.2 212.9 444.5 213.1 444.9 213.4 445.2 213.6 445.6 213.9 445.9 214.2 446.3 214.5 446.6 214.7 447.0 215.0 447.3 215.3 447.7 215.5 448.0 215.8 448.4 216.0 448.7 216.2 449.1 216.5 449.4 216.7 449.8 216.8 450.1 217.0 450.5 217.2 450.8 217.3 451.2 217.4 451.5 217.5 451.9 217.6 452.2 217.6 452.6 217.7 452.9 217.8 453.3 217.8 453.6 217.9 454.0 217.9 454.3 218.0 454.7 218.0 455.0 218.1 455.4 218.2 455.7 218.2 456.1 218.3 456.4 218.4 456.8 218.5 457.1 218.7 457.5 218.8 457.8 218.9 458.2 219.1 458.5 219.2 458.9 219.4 459.2 219.5 459.6 219.7 459.9 219.8 460.3 219.9 460.6 220.1 461.0 220.2 461.3 220.2 461.7 220.3 462.0 220.4 462.4 220.4 462.7 220.4 463.1 220.4 463.4 220.4 463.8 220.3 464.1 220.3 464.5 220.2 464.8 220.1 465.2 220.0 465.5 219.9 465.9 219.8 466.2 219.7 466.6 219.6 466.9 219.4 467.3 219.3 467.6 219.1 468.0 219.0 468.3 218.8 468.7 218.7 469.0 218.5 469.4 218.3 469.7 218.1 470.1 218.0 470.4 217.8 470.8 217.6 471.1 217.5 471.5 217.4 471.8 217.3 472.2 217.2 472.5 217.2 472.9 217.3 473.2 217.3 473.6 217.5 473.9 217.7 474.3 217.9 474.6 218.2 475.0 218.5 475.3 218.8 475.7 219.1 476.0 219.5 476.4 219.8 476.7 220.2 477.1 220.5 477.4 220.8 477.8 221.2 478.1 221.5 478.5 221.8 478.8 222.2 479.2 222.5 479.5 222.9 479.9 223.2 480.2 223.6 480.6 224.0 480.9 224.3 481.3 224.7 481.6 225.0" stroke="#2e8b2e" opacity="0.85"/>
<path d="M68.6 223.3L69.0 222.5 69.3 221.8 69.7 221.0 70.0 220.3 70.4 219.7 70.7 219.1 71.1 218.6 71.4 218.1 71.8 217.7 72.1 217.3 72.5 216.9 72.8 216.5 73.2 216.2 73.5 215.9 73.9 215.7 74.2 215.5 74.6 215.3 74.9 215.2 75.3 215.1 75.6 215.0 76.0 215.0 76.3 214.9 76.7 214.9 77.0 214.9 77.4 214.9 77.7 214.9 78.1 214.9 78.4 215.0 78.8 215.0 79.1 215.0 79.5 215.0 79.8 215.0 80.2 215.0 80.5 215.0 80.9 215.0 81.2 215.0 81.6 215.0 81.9 215.0 82.3 215.0 82.6 214.9 83.0 214.9 83.3 214.8 83.7 214.6 84.0 214.5 84.4 214.4 84.7 214.2 85.1 214.0 85.4 213.8 85.8 213.6 86.1 213.4 86.5 213.2 86.8 213.0 87.2 212.8 87.5 212.5 87.9 212.3 88.2 212.1 88.6 211.9 88.9 211.6 89.3 211.4 89.6 211.2 90.0 211.0 90.3 210.7 90.7 210.5 91.0 210.3 91.4 210.0 91.7 209.8 92.1 209.6 92.4 209.4 92.8 209.2 93.1 209.0 93.5 208.8 93.8 208.7 94.2 208.5 94.5 208.4 94.9 208.3 95.2 208.3 95.6 208.2 95.9 208.2 96.3 208.2 96.6 208.3 97.0 208.4 97.3 208.5 97.7 208.6 98.0 208.8 98.4 209.0 98.7 209.1 99.1 209.3 99.4 209.6 99.8 209.8 100.1 210.0 100.5 210.2 100.8 210.5 101.2 210.7 101.5 210.9 101.9 211.2 102.2 211.4 102.6 211.6 102.9 211.9 103.3 212.2 103.6 212.4 104.0 212.7 104.3 212.9 104.7 213.1 105.0 213.4 105.4 213.6 105.7 213.8 106.1 213.9 106.4 214.1 106.8 214.2 107.1 214.3 107.5 214.4 107.8 214.4 108.2 214.5 108.5 214.4 108.9 214.4 109.2 214.3 109.6 214.2 109.9 214.0 110.3 213.9 110.6 213.7 111.0 213.5 111.3 213.2 111.7 213.0 112.0 212.8 112.4 212.5 112.7 212.2 113.1 212.0 113.4 211.7 113.8 211.4 114.1 211.1 114.5 210.9 114.8 210.6 115.2 210.4 115.5 210.1 115.9 209.9 116.2 209.6 116.6 209.4 116.9 209.1 117.3 208.9 117.6 208.7 118.0 208.4 118.3 208.2 118.7 208.0 119.0 207.8 119.4 207.6 119.7 207.4 120.1 207.2 120.4 207.0 120.8 206.9 121.1 206.7 121.5 206.6 121.8 206.5 122.2 206.5 122.5 206.4 122.9 206.4 123.2 206.4 123.6 206.4 123.9 206.5 124.3 206.6 124.6 206.7 125.0 206.9 125.3 207.1 125.7 207.4 126.0 207.7 126.4 208.0 126.7 208.4 127.1 208.8 127.4 209.3 127.8 209.7 128.1 210.2 128.5 210.7 128.8 211.2 129.2 211.8 129.5 212.5 129.9 213.2 130.2 214.0 130.6 214.8 130.9 215.6 131.3 216.4 131.6 217.2 132.0 218.0 132.3 218.7 132.7 219.4 133.0 219.9 133.4 220.4 133.7 220.8 134.1 221.0 134.4 221.1 134.8 221.0 135.1 220.8 135.5 220.5 135.8 220.1 136.2 219.7 136.5 219.1 136.9 218.6 137.2 218.1 137.6 217.5 137.9 217.0 138.3 216.6 138.6 216.2 139.0 215.7 139.3 215.3 139.7 215.0 140.0 214.6 140.4 214.3 140.7 214.0 141.1 213.7 141.4 213.5 141.8 213.3 142.1 213.2 142.5 213.2 142.8 213.2 143.2 213.3 143.5 213.4 143.9 213.6 144.2 213.8 144.6 214.1 144.9 214.4 145.3 214.7 145.6 215.0 146.0 215.4 146.3 215.8 146.7 216.2 147.0 216.6 147.4 217.0 147.7 217.4 148.1 217.8 148.4 218.3 148.8 218.8 149.1 219.2 149.5 219.7 149.8 220.2 150.2 220.6 150.5 221.1 150.9 221.5 151.2 221.9 151.6 222.3 151.9 222.6 152.3 222.9 152.6 223.2 153.0 223.4 153.3 223.6 153.7 223.8 154.0 223.9 154.4 224.0 154.7 224.1 155.1 224.2 155.4 224.3 155.8 224.4 156.1 224.5 156.5 224.5 156.8 224.6 157.2 224.7 157.5 224.7 157.9 224.8 158.2 224.9 158.6 224.9 158.9 225.0 159.3 225.1 159.6 225.3 160.0 225.4 160.3 225.5 160.7 225.7 161.0 225.9 161.4 226.0 161.7 226.2 162.1 226.4 162.4 226.6 162.8 226.7 163.1 226.9 163.5 227.0 163.8 227.1 164.2 227.2 164.5 227.3 164.9 227.3 165.2 227.4 165.6 227.4 165.9 227.4 166.3 227.4 166.6 227.4 167.0 227.4 167.3 227.3 167.7 227.3 168.0 227.2 168.4 227.2 168.7 227.1 169.1 227.0 169.4 226.9 169.8 226.8 170.1 226.6 170.5 226.5 170.8 226.3 171.2 226.1 171.5 225.9 171.9 225.6 172.2 225.3 172.6 225.0 172.9 224.7 173.3 224.4 173.6 224.0 174.0 223.6 174.3 223.2 174.7 222.9 175.0 222.4 175.4 222.0 175.7 221.6 176.1 221.2 176.4 220.8 176.8 220.4 177.1 219.9 177.5 219.5 177.8 219.0 178.2 218.5 178.5 218.0 178.9 217.6 179.2 217.1 179.6 216.7 179.9 216.2 180.3 215.9 180.6 215.5 181.0 215.2 181.3 215.0 181.7 214.8 182.0 214.7 182.4 214.6 182.7 214.6 183.1 214.7 183.4 214.9 183.8 215.0 184.1 215.2 184.5 215.5 184.8 215.8 185.2 216.1 185.5 216.4 185.9 216.8 186.2 217.2 186.6 217.6 186.9 218.0 187.3 218.4 187.6 218.9 188.0 219.4 188.3 219.9 188.7 220.5 189.0 221.0 189.4 221.6 189.7 222.1 190.1 222.6 190.4 223.0 190.8 223.5 191.1 223.8 191.5 224.1 191.8 224.4 192.2 224.5 192.5 224.6 192.9 224.6 193.2 224.5 193.6 224.3 193.9 224.0 194.3 223.5 194.6 223.0 195.0 222.4 195.3 221.5 195.7 220.3 196.0 218.9 196.4 217.3 196.7 215.6 197.1 213.8 197.4 212.0 197.8 210.3 198.1 208.5 198.5 206.7 198.8 204.9 199.2 203.1 199.5 201.4 199.9 199.9 200.2 198.5 200.6 197.3 200.9 196.3 201.3 195.5 201.6 194.8 202.0 194.2 202.3 193.7 202.7 193.4 203.0 193.3 203.4 193.7 203.7 195.0 204.1 197.2 204.4 200.2 204.8 203.6 205.1 207.1 205.5 210.7 205.8 214.3 206.2 218.0 206.5 221.0 206.9 222.6 207.2 219.8 207.6 213.3 207.9 204.2 208.3 196.5 208.6 189.3 209.0 181.3 209.3 169.8 209.7 150.9 210.0 143.3 210.4 137.9 210.7 133.8 211.1 130.2 211.4 126.7 211.8 122.3 212.1 118.6 212.5 115.1 212.8 111.9 213.2 109.0 213.5 105.4 213.9 102.1 214.2 99.1 214.6 96.4 214.9 93.7 215.3 91.2 215.6 88.6 216.0 85.9 216.3 83.1 216.7 80.2 217.0 77.3 217.4 74.5 217.7 71.8 218.1 69.4 218.4 67.2 218.8 65.1 219.1 63.1 219.5 61.3 219.8 59.6 220.2 57.9 220.5 56.4 220.9 54.9 221.2 53.4 221.6 52.0 221.9 50.6 222.3 49.3 222.6 47.9 223.0 46.6 223.3 45.3 223.7 44.0 224.0 42.8 224.4 41.7 224.7 40.6 225.1 39.6 225.4 38.6 225.8 37.7 226.1 36.8 226.5 36.0 226.8 35.2 227.2 34.5 227.5 33.8 227.9 33.2 228.2 32.6 228.6 32.1 228.9 31.6 229.3 31.2 229.6 30.8 230.0 30.4 230.3 30.0 230.7 29.7 231.0 29.4 231.4 29.1 231.7 28.8 232.1 28.6 232.4 28.4 232.8 28.2 233.1 28.0 233.5 27.9 233.8 27.8 234.2 27.7 234.5 27.6 234.9 27.5 235.2 27.4 235.6 27.3 235.9 27.3 236.3 27.2 236.6 27.2 237.0 27.1 237.3 27.1 237.7 27.1 238.0 27.0 238.4 27.0 238.7 27.0 239.1 27.0 239.4 27.0 239.8 26.9 240.1 26.9 240.5 26.9 240.8 26.9 241.2 26.9 241.5 26.9 241.9 26.9 242.2 26.9 242.6 26.9 242.9 26.9 243.3 26.9 243.6 26.8 244.0 26.8 244.3 26.8 244.7 26.8 245.0 26.8 245.4 26.8 245.7 26.7 246.1 26.7 246.4 26.7 246.8 26.7 247.1 26.6 247.5 26.6 247.8 26.6 248.2 26.6 248.5 26.5 248.9 26.5 249.2 26.5 249.6 26.5 249.9 26.4 250.3 26.4 250.6 26.4 251.0 26.4 251.3 26.4 251.7 26.4 252.0 26.4 252.4 26.4 252.7 26.4 253.1 26.4 253.4 26.4 253.8 26.5 254.1 26.5 254.5 26.6 254.8 26.7 255.2 26.8 255.5 26.9 255.9 27.1 256.2 27.2 256.6 27.4 256.9 27.6 257.3 27.7 257.6 28.0 258.0 28.2 258.3 28.5 258.7 28.8 259.0 29.1 259.4 29.5 259.7 29.9 260.1 30.3 260.4 30.8 260.8 31.3 261.1 31.8 261.5 32.4 261.8 33.0 262.2 33.6 262.5 34.2 262.9 34.9 263.2 35.7 263.6 36.5 263.9 37.4 264.3 38.3 264.6 39.2 265.0 40.2 265.3 41.3 265.7 42.4 266.0 43.5 266.4 44.7 266.7 46.0 267.1 47.3 267.4 48.7 267.8 50.1 268.1 51.6 268.5 53.1 268.8 54.6 269.2 56.2 269.5 57.8 269.9 59.4 270.2 61.1 270.6 62.7 270.9 64.5 271.3 66.2 271.6 68.0 272.0 69.8 272.3 71.6 272.7 73.5 273.0 75.3 273.4 77.2 273.7 79.1 274.1 81.0 274.4 83.0 274.8 85.1 275.1 87.2 275.5 89.5 275.8 91.9 276.2 94.4 276.5 97.1 276.9 99.9 277.2 102.7 277.6 105.5 277.9 108.3 278.3 110.9 278.6 113.4 279.0 115.9 279.3 118.3 279.7 120.6 280.0 122.9 280.4 125.2 280.7 127.4 281.1 129.6 281.4 131.8 281.8 134.0 282.1 136.2 282.5 138.4 282.8 140.6 283.2 142.7 283.5 144.8 283.9 146.9 284.2 148.9 284.6 150.8 284.9 152.7 285.3 154.5 285.6 156.2 286.0 158.0 286.3 159.6 286.7 161.2 287.0 162.8 287.4 164.3 287.7 165.8 288.1 167.2 288.4 168.6 288.8 169.9 289.1 171.2 289.5 172.5 289.8 173.7 290.2 174.9 290.5 176.1 290.9 177.2 291.2 178.4 291.6 179.5 291.9 180.6 292.3 181.7 292.6 182.7 293.0 183.8 293.3 184.8 293.7 185.9 294.0 186.9 294.4 187.9 294.7 188.9 295.1 189.9 295.4 191.0 295.8 192.0 296.1 193.1 296.5 194.2 296.8 195.3 297.2 196.5 297.5 197.7 297.9 199.0 298.2 200.3 298.6 201.6 298.9 202.9 299.3 204.1 299.6 205.2 300.0 206.2 300.3 207.0 300.7 207.7 301.0 208.3 301.4 208.8 301.7 209.2 302.1 209.6 302.4 209.8 302.8 210.0 303.1 210.1 303.5 210.0 303.8 209.9 304.2 209.7 304.5 209.4 304.9 209.0 305.2 208.6 305.6 208.2 305.9 207.7 306.3 207.2 306.6 206.7 307.0 206.2 307.3 205.8 307.7 205.4 308.0 205.1 308.4 204.8 308.7 204.6 309.1 204.5 309.4 204.5 309.8 204.5 310.1 204.5 310.5 204.6 310.8 204.7 311.2 204.9 311.5 205.1 311.9 205.3 312.2 205.5 312.6 205.7 312.9 205.9 313.3 206.1 313.6 206.3 314.0 206.5 314.3 206.7 314.7 206.9 315.0 207.0 315.4 207.1 315.7 207.3 316.1 207.4 316.4 207.5 316.8 207.6 317.1 207.7 317.5 207.9 317.8 208.0 318.2 208.2 318.5 208.4 318.9 208.6 319.2 208.9 319.6 209.2 319.9 209.5 320.3 209.9 320.6 210.4 321.0 210.9 321.3 211.5 321.7 212.2 322.0 212.9 322.4 213.6 322.7 214.4 323.1 215.2 323.4 216.0 323.8 216.8 324.1 217.6 324.5 218.4 324.8 219.2 325.2 220.0 325.5 220.7 325.9 221.4 326.2 222.2 326.6 222.9 326.9 223.7 327.3 224.4 327.6 225.0 328.0 225.6 328.3 226.2 328.7 226.7 329.0 227.2 329.4 227.5 329.7 227.7 330.1 227.9 330.4 227.9 330.8 227.9 331.1 227.8 331.5 227.7 331.8 227.5 332.2 227.2 332.5 226.9 332.9 226.6 333.2 226.3 333.6 226.0 333.9 225.6 334.3 225.3 334.6 225.0 335.0 224.6 335.3 224.3 335.7 224.0 336.0 223.7 336.4 223.5 336.7 223.2 337.1 223.0 337.4 222.8 337.8 222.7 338.1 222.5 338.5 222.3 338.8 222.2 339.2 222.0 339.5 221.9 339.9 221.8 340.2 221.7 340.6 221.6 340.9 221.5 341.3 221.5 341.6 221.4 342.0 221.4 342.3 221.4 342.7 221.4 343.0 221.4 343.4 221.4 343.7 221.5 344.1 221.5 344.4 221.7 344.8 221.8 345.1 222.0 345.5 222.2 345.8 222.4 346.2 222.6 346.5 222.9 346.9 223.2 347.2 223.5 347.6 223.8 347.9 224.1 348.3 224.4 348.6 224.8 349.0 225.1 349.3 225.5 349.7 225.8 350.0 226.2 350.4 226.6 350.7 226.9 351.1 227.2 351.4 227.5 351.8 227.7 352.1 227.8 352.5 227.8 352.8 227.7 353.2 227.4 353.5 226.9 353.9 226.3 354.2 225.6 354.6 224.8 354.9 223.9 355.3 223.0 355.6 222.0 356.0 221.1 356.3 220.2 356.7 219.2 357.0 218.2 357.4 217.2 357.7 216.2 358.1 215.2 358.4 214.3 358.8 213.3 359.1 212.4 359.5 211.6 359.8 210.9 360.2 210.3 360.5 209.8 360.9 209.3 361.2 209.0 361.6 208.6 361.9 208.3 362.3 208.1 362.6 207.8 363.0 207.7 363.3 207.5 363.7 207.4 364.0 207.4 364.4 207.4 364.7 207.4 365.1 207.5 365.4 207.6 365.8 207.7 366.1 207.9 366.5 208.1 366.8 208.3 367.2 208.6 367.5 208.9 367.9 209.1 368.2 209.4 368.6 209.8 368.9 210.1 369.3 210.4 369.6 210.7 370.0 211.0 370.3 211.4 370.7 211.7 371.0 212.0 371.4 212.4 371.7 212.8 372.1 213.1 372.4 213.5 372.8 213.8 373.1 214.1 373.5 214.4 373.8 214.6 374.2 214.8 374.5 215.0 374.9 215.1 375.2 215.2 375.6 215.2 375.9 215.2 376.3 215.1 376.6 215.0 377.0 214.9 377.3 214.8 377.7 214.6 378.0 214.4 378.4 214.3 378.7 214.1 379.1 213.9 379.4 213.6 379.8 213.4 380.1 213.2 380.5 213.0 380.8 212.8 381.2 212.5 381.5 212.3 381.9 212.0 382.2 211.8 382.6 211.5 382.9 211.3 383.3 211.0 383.6 210.8 384.0 210.5 384.3 210.3 384.7 210.0 385.0 209.8 385.4 209.6 385.7 209.4 386.1 209.2 386.4 209.0 386.8 208.8 387.1 208.6 387.5 208.5 387.8 208.3 388.2 208.1 388.5 208.0 388.9 207.8 389.2 207.7 389.6 207.6 389.9 207.5 390.3 207.4 390.6 207.3 391.0 207.2 391.3 207.2 391.7 207.2 392.0 207.2 392.4 207.2 392.7 207.2 393.1 207.3 393.4 207.3 393.8 207.4 394.1 207.5 394.5 207.6 394.8 207.7 395.2 207.9 395.5 208.0 395.9 208.1 396.2 208.3 396.6 208.4 396.9 208.6 397.3 208.7 397.6 208.9 398.0 209.0 398.3 209.1 398.7 209.3 399.0 209.4 399.4 209.5 399.7 209.6 400.1 209.7 400.4 209.8 400.8 209.9 401.1 210.0 401.5 210.1 401.8 210.2 402.2 210.3 402.5 210.3 402.9 210.4 403.2 210.5 403.6 210.6 403.9 210.6 404.3 210.7 404.6 210.8 405.0 210.9 405.3 211.0 405.7 211.0 406.0 211.1 406.4 211.2 406.7 211.3 407.1 211.4 407.4 211.5 407.8 211.6 408.1 211.7 408.5 211.8 408.8 212.0 409.2 212.1 409.5 212.2 409.9 212.4 410.2 212.5 410.6 212.7 410.9 212.8 411.3 213.0 411.6 213.1 412.0 213.3 412.3 213.4 412.7 213.6 413.0 213.7 413.4 213.9 413.7 214.0 414.1 214.1 414.4 214.3 414.8 214.4 415.1 214.5 415.5 214.7 415.8 214.8 416.2 215.0 416.5 215.1 416.9 215.2 417.2 215.3 417.6 215.4 417.9 215.5 418.3 215.6 418.6 215.7 419.0 215.7 419.3 215.7 419.7 215.8 420.0 215.8 420.4 215.8 420.7 215.7 421.1 215.7 421.4 215.6 421.8 215.6 422.1 215.5 422.5 215.5 422.8 215.4 423.2 215.3 423.5 215.3 423.9 215.2 424.2 215.1 424.6 215.1 424.9 215.1 425.3 215.0 425.6 215.0 426.0 215.1 426.3 215.1 426.7 215.2 427.0 215.3 427.4 215.4 427.7 215.6 428.1 215.9 428.4 216.2 428.8 216.5 429.1 216.8 429.5 217.2 429.8 217.6 430.2 218.0 430.5 218.5 430.9 218.9 431.2 219.4 431.6 219.8 431.9 220.3 432.3 220.7 432.6 221.1 433.0 221.6 433.3 222.0 433.7 222.4 434.0 222.9 434.4 223.4 434.7 223.8 435.1 224.3 435.4 224.7 435.8 225.2 436.1 225.6 436.5 226.0 436.8 226.4 437.2 226.8 437.5 227.2 437.9 227.5 438.2 227.8 438.6 228.0 438.9 228.2 439.3 228.4 439.6 228.6 440.0 228.7 440.3 228.8 440.7 228.9 441.0 229.0 441.4 229.0 441.7 229.1 442.1 229.1 442.4 229.2 442.8 229.2 443.1 229.2 443.5 229.3 443.8 229.3 444.2 229.3 444.5 229.3 444.9 229.3 445.2 229.3 445.6 229.4 445.9 229.4 446.3 229.4 446.6 229.4 447.0 229.4 447.3 229.4 447.7 229.4 448.0 229.5 448.4 229.5 448.7 229.5 449.1 229.6 449.4 229.6 449.8 229.7 450.1 229.7 450.5 229.8 450.8 229.9 451.2 229.9 451.5 230.0 451.9 230.1 452.2 230.1 452.6 230.2 452.9 230.3 453.3 230.4 453.6 230.4 454.0 230.5 454.3 230.6 454.7 230.6 455.0 230.7 455.4 230.8 455.7 230.8 456.1 230.9 456.4 231.0 456.8 231.0 457.1 231.1 457.5 231.2 457.8 231.2 458.2 231.3 458.5 231.3 458.9 231.4 459.2 231.4 459.6 231.5 459.9 231.5 460.3 231.5 460.6 231.6 461.0 231.6 461.3 231.6 461.7 231.7 462.0 231.7 462.4 231.7 462.7 231.7 463.1 231.7 463.4 231.7 463.8 231.7 464.1 231.7 464.5 231.7 464.8 231.7 465.2 231.7 465.5 231.7 465.9 231.6 466.2 231.6 466.6 231.5 466.9 231.5 467.3 231.4 467.6 231.4 468.0 231.3 468.3 231.3 468.7 231.2 469.0 231.1 469.4 231.1 469.7 231.0 470.1 231.0 470.4 230.9 470.8 230.8 471.1 230.8 471.5 230.7 471.8 230.6 472.2 230.6 472.5 230.5 472.9 230.5 473.2 230.4 473.6 230.4 473.9 230.3 474.3 230.3 474.6 230.2 475.0 230.2 475.3 230.1 475.7 230.1 476.0 230.0 476.4 230.0 476.7 229.9 477.1 229.9 477.4 229.9 477.8 229.8 478.1 229.8 478.5 229.7 478.8 229.7 479.2 229.7 479.5 229.6 479.9 229.6 480.2 229.6 480.6 229.5 480.9 229.5 481.3 229.5 481.6 229.4" stroke="#3232ff" opacity="0.92"/>
<path d="M68.6 225.1L69.0 225.2 69.3 225.3 69.7 225.5 70.0 225.6 70.4 225.7 70.7 225.8 71.1 225.9 71.4 226.1 71.8 226.2 72.1 226.3 72.5 226.4 72.8 226.5 73.2 226.7 73.5 226.8 73.9 226.9 74.2 227.0 74.6 227.1 74.9 227.3 75.3 227.4 75.6 227.5 76.0 227.7 76.3 227.8 76.7 227.9 77.0 228.1 77.4 228.2 77.7 228.4 78.1 228.5 78.4 228.7 78.8 228.8 79.1 229.0 79.5 229.1 79.8 229.3 80.2 229.4 80.5 229.6 80.9 229.7 81.2 229.9 81.6 230.0 81.9 230.2 82.3 230.3 82.6 230.4 83.0 230.6 83.3 230.7 83.7 230.8 84.0 230.9 84.4 231.0 84.7 231.0 85.1 231.1 85.4 231.1 85.8 231.2 86.1 231.2 86.5 231.2 86.8 231.3 87.2 231.3 87.5 231.3 87.9 231.3 88.2 231.3 88.6 231.3 88.9 231.3 89.3 231.3 89.6 231.3 90.0 231.3 90.3 231.2 90.7 231.2 91.0 231.2 91.4 231.2 91.7 231.1 92.1 231.1 92.4 231.1 92.8 231.0 93.1 231.0 93.5 231.0 93.8 230.9 94.2 230.9 94.5 230.9 94.9 230.8 95.2 230.8 95.6 230.8 95.9 230.7 96.3 230.7 96.6 230.6 97.0 230.6 97.3 230.6 97.7 230.5 98.0 230.5 98.4 230.5 98.7 230.4 99.1 230.4 99.4 230.3 99.8 230.3 100.1 230.3 100.5 230.2 100.8 230.2 101.2 230.1 101.5 230.1 101.9 230.0 102.2 229.9 102.6 229.9 102.9 229.8 103.3 229.8 103.6 229.7 104.0 229.6 104.3 229.6 104.7 229.5 105.0 229.4 105.4 229.3 105.7 229.2 106.1 229.1 106.4 229.0 106.8 228.9 107.1 228.8 107.5 228.6 107.8 228.5 108.2 228.4 108.5 228.2 108.9 228.1 109.2 227.9 109.6 227.8 109.9 227.6 110.3 227.4 110.6 227.3 111.0 227.1 111.3 226.9 111.7 226.7 112.0 226.6 112.4 226.4 112.7 226.2 113.1 226.0 113.4 225.9 113.8 225.7 114.1 225.6 114.5 225.4 114.8 225.2 115.2 225.1 115.5 224.9 115.9 224.8 116.2 224.6 116.6 224.5 116.9 224.3 117.3 224.2 117.6 224.1 118.0 223.9 118.3 223.8 118.7 223.6 119.0 223.5 119.4 223.4 119.7 223.3 120.1 223.1 120.4 223.0 120.8 222.9 121.1 222.8 121.5 222.7 121.8 222.7 122.2 222.6 122.5 222.5 122.9 222.5 123.2 222.4 123.6 222.4 123.9 222.4 124.3 222.4 124.6 222.4 125.0 222.4 125.3 222.4 125.7 222.4 126.0 222.5 126.4 222.5 126.7 222.6 127.1 222.6 127.4 222.7 127.8 222.8 128.1 222.8 128.5 222.9 128.8 223.0 129.2 223.1 129.5 223.2 129.9 223.3 130.2 223.4 130.6 223.5 130.9 223.6 131.3 223.8 131.6 223.9 132.0 224.0 132.3 224.2 132.7 224.3 133.0 224.5 133.4 224.6 133.7 224.8 134.1 224.9 134.4 225.1 134.8 225.2 135.1 225.3 135.5 225.5 135.8 225.6 136.2 225.7 136.5 225.8 136.9 226.0 137.2 226.1 137.6 226.1 137.9 226.2 138.3 226.3 138.6 226.4 139.0 226.5 139.3 226.6 139.7 226.6 140.0 226.7 140.4 226.8 140.7 226.8 141.1 226.9 141.4 227.0 141.8 227.1 142.1 227.1 142.5 227.2 142.8 227.3 143.2 227.4 143.5 227.5 143.9 227.6 144.2 227.8 144.6 227.9 144.9 228.0 145.3 228.2 145.6 228.4 146.0 228.5 146.3 228.7 146.7 228.9 147.0 229.1 147.4 229.3 147.7 229.5 148.1 229.6 148.4 229.8 148.8 230.0 149.1 230.2 149.5 230.3 149.8 230.5 150.2 230.6 150.5 230.8 150.9 230.9 151.2 231.0 151.6 231.1 151.9 231.2 152.3 231.2 152.6 231.3 153.0 231.3 153.3 231.2 153.7 231.2 154.0 231.1 154.4 230.9 154.7 230.7 155.1 230.5 155.4 230.2 155.8 229.9 156.1 229.6 156.5 229.2 156.8 228.8 157.2 228.4 157.5 228.0 157.9 227.6 158.2 227.2 158.6 226.8 158.9 226.4 159.3 225.9 159.6 225.5 160.0 225.1 160.3 224.7 160.7 224.3 161.0 223.9 161.4 223.5 161.7 223.0 162.1 222.6 162.4 222.2 162.8 221.8 163.1 221.4 163.5 221.0 163.8 220.6 164.2 220.2 164.5 219.9 164.9 219.5 165.2 219.2 165.6 218.9 165.9 218.6 166.3 218.3 166.6 218.1 167.0 217.9 167.3 217.7 167.7 217.5 168.0 217.3 168.4 217.1 168.7 217.0 169.1 216.8 169.4 216.7 169.8 216.5 170.1 216.4 170.5 216.3 170.8 216.2 171.2 216.0 171.5 215.9 171.9 215.8 172.2 215.7 172.6 215.5 172.9 215.4 173.3 215.3 173.6 215.1 174.0 215.0 174.3 214.8 174.7 214.6 175.0 214.5 175.4 214.3 175.7 214.1 176.1 213.9 176.4 213.7 176.8 213.4 177.1 213.2 177.5 213.0 177.8 212.8 178.2 212.6 178.5 212.4 178.9 212.1 179.2 211.9 179.6 211.7 179.9 211.5 180.3 211.3 180.6 211.1 181.0 210.9 181.3 210.7 181.7 210.6 182.0 210.4 182.4 210.2 182.7 210.1 183.1 209.9 183.4 209.7 183.8 209.6 184.1 209.5 184.5 209.4 184.8 209.3 185.2 209.2 185.5 209.1 185.9 209.1 186.2 209.1 186.6 209.1 186.9 209.2 187.3 209.3 187.6 209.4 188.0 209.5 188.3 209.7 188.7 210.0 189.0 210.2 189.4 210.5 189.7 210.8 190.1 211.1 190.4 211.4 190.8 211.8 191.1 212.1 191.5 212.4 191.8 212.8 192.2 213.1 192.5 213.4 192.9 213.7 193.2 214.1 193.6 214.4 193.9 214.8 194.3 215.1 194.6 215.5 195.0 215.9 195.3 216.3 195.7 216.7 196.0 217.1 196.4 217.6 196.7 218.0 197.1 218.5 197.4 219.1 197.8 219.6 198.1 220.2 198.5 220.9 198.8 221.2 199.2 221.4 199.5 221.4 199.9 221.5 200.2 221.4 200.6 221.4 200.9 221.4 201.3 221.3 201.6 221.3 202.0 221.2 202.3 221.1 202.7 220.9 203.0 220.7 203.4 220.4 203.7 220.1 204.1 219.7 204.4 219.2 204.8 218.7 205.1 218.1 205.5 217.5 205.8 216.9 206.2 216.2 206.5 215.6 206.9 214.9 207.2 214.3 207.6 213.6 207.9 213.1 208.3 212.5 208.6 211.9 209.0 211.3 209.3 210.7 209.7 210.1 210.0 209.5 210.4 209.0 210.7 208.4 211.1 207.9 211.4 207.4 211.8 206.9 212.1 206.4 212.5 205.9 212.8 205.5 213.2 205.1 213.5 204.7 213.9 204.4 214.2 204.1 214.6 203.7 214.9 203.4 215.3 203.1 215.6 202.9 216.0 202.6 216.3 202.4 216.7 202.2 217.0 202.0 217.4 201.9 217.7 201.7 218.1 201.7 218.4 201.6 218.8 201.6 219.1 201.6 219.5 201.7 219.8 201.8 220.2 202.0 220.5 202.2 220.9 202.5 221.2 202.9 221.6 203.2 221.9 203.6 222.3 204.1 222.6 204.5 223.0 205.0 223.3 205.6 223.7 206.2 224.0 206.9 224.4 207.6 224.7 208.4 225.1 209.3 225.4 210.2 225.8 211.1 226.1 212.0 226.5 212.8 226.8 213.6 227.2 214.4 227.5 215.1 227.9 215.7 228.2 216.2 228.6 216.6 228.9 217.0 229.3 217.3 229.6 217.6 230.0 217.9 230.3 218.1 230.7 218.3 231.0 218.4 231.4 218.6 231.7 218.7 232.1 218.8 232.4 218.9 232.8 219.0 233.1 219.1 233.5 219.2 233.8 219.2 234.2 219.3 234.5 219.4 234.9 219.5 235.2 219.5 235.6 219.6 235.9 219.6 236.3 219.7 236.6 219.7 237.0 219.7 237.3 219.7 237.7 219.7 238.0 219.7 238.4 219.7 238.7 219.7 239.1 219.6 239.4 219.5 239.8 219.4 240.1 219.3 240.5 219.2 240.8 219.1 241.2 218.9 241.5 218.7 241.9 218.6 242.2 218.4 242.6 218.2 242.9 218.1 243.3 217.9 243.6 217.8 244.0 217.7 244.3 217.5 244.7 217.5 245.0 217.4 245.4 217.4 245.7 217.4 246.1 217.5 246.4 217.6 246.8 217.7 247.1 217.9 247.5 218.1 247.8 218.3 248.2 218.6 248.5 218.9 248.9 219.2 249.2 219.6 249.6 219.9 249.9 220.3 250.3 220.7 250.6 221.2 251.0 221.7 251.3 222.2 251.7 222.7 252.0 223.3 252.4 223.9 252.7 224.4 253.1 225.0 253.4 225.5 253.8 226.0 254.1 226.4 254.5 226.7 254.8 227.0 255.2 227.2 255.5 227.3 255.9 227.3 256.2 227.2 256.6 227.1 256.9 226.9 257.3 226.6 257.6 226.2 258.0 225.9 258.3 225.4 258.7 225.0 259.0 224.5 259.4 224.0 259.7 223.5 260.1 223.0 260.4 222.4 260.8 221.9 261.1 221.4 261.5 221.0 261.8 220.5 262.2 220.1 262.5 219.6 262.9 219.2 263.2 218.7 263.6 218.2 263.9 217.8 264.3 217.3 264.6 216.8 265.0 216.3 265.3 215.8 265.7 215.3 266.0 214.8 266.4 214.2 266.7 213.7 267.1 213.1 267.4 212.5 267.8 211.8 268.1 211.1 268.5 210.4 268.8 209.6 269.2 208.8 269.5 207.9 269.9 207.3 270.2 206.9 270.6 206.6 270.9 206.4 271.3 206.2 271.6 206.1 272.0 206.0 272.3 206.0 272.7 205.9 273.0 206.0 273.4 206.0 273.7 206.2 274.1 206.3 274.4 206.6 274.8 206.9 275.1 207.3 275.5 207.8 275.8 208.3 276.2 208.8 276.5 209.4 276.9 210.0 277.2 210.6 277.6 211.2 277.9 211.8 278.3 212.4 278.6 213.0 279.0 213.5 279.3 214.1 279.7 214.6 280.0 215.1 280.4 215.6 280.7 216.1 281.1 216.5 281.4 216.9 281.8 217.3 282.1 217.5 282.5 217.7 282.8 217.8 283.2 217.7 283.5 217.4 283.9 217.0 284.2 216.3 284.6 215.4 284.9 214.3 285.3 213.1 285.6 211.7 286.0 210.3 286.3 208.9 286.7 207.4 287.0 205.8 287.4 204.3 287.7 202.9 288.1 201.5 288.4 200.1 288.8 198.7 289.1 197.4 289.5 196.0 289.8 194.7 290.2 193.4 290.5 192.2 290.9 191.0 291.2 189.9 291.6 188.9 291.9 188.0 292.3 187.2 292.6 186.4 293.0 185.6 293.3 184.9 293.7 184.2 294.0 183.5 294.4 183.0 294.7 182.4 295.1 182.0 295.4 181.7 295.8 181.4 296.1 181.3 296.5 181.8 296.8 182.8 297.2 184.1 297.5 185.2 297.9 186.4 298.2 188.5 298.6 191.7 298.9 196.0 299.3 201.0 299.6 205.2 300.0 207.2 300.3 205.9 300.7 201.6 301.0 195.4 301.4 188.9 301.7 182.5 302.1 176.0 302.4 169.9 302.8 165.0 303.1 161.2 303.5 158.1 303.8 155.0 304.2 151.3 304.5 146.2 304.9 139.7 305.2 132.3 305.6 124.7 305.9 117.8 306.3 112.1 306.6 107.7 307.0 104.3 307.3 101.3 307.7 98.5 308.0 95.7 308.4 93.2 308.7 90.7 309.1 88.3 309.4 85.8 309.8 83.2 310.1 80.5 310.5 77.8 310.8 75.2 311.2 72.6 311.5 70.2 311.9 67.9 312.2 65.8 312.6 63.8 312.9 61.9 313.3 60.1 313.6 58.4 314.0 56.8 314.3 55.3 314.7 53.8 315.0 52.4 315.4 51.1 315.7 49.8 316.1 48.5 316.4 47.3 316.8 46.2 317.1 45.0 317.5 44.0 317.8 43.0 318.2 42.0 318.5 41.0 318.9 40.1 319.2 39.3 319.6 38.4 319.9 37.6 320.3 36.9 320.6 36.2 321.0 35.5 321.3 34.8 321.7 34.2 322.0 33.7 322.4 33.1 322.7 32.6 323.1 32.1 323.4 31.6 323.8 31.2 324.1 30.8 324.5 30.4 324.8 30.1 325.2 29.8 325.5 29.6 325.9 29.3 326.2 29.1 326.6 28.9 326.9 28.8 327.3 28.6 327.6 28.5 328.0 28.3 328.3 28.2 328.7 28.1 329.0 28.0 329.4 28.0 329.7 27.9 330.1 27.8 330.4 27.8 330.8 27.7 331.1 27.6 331.5 27.6 331.8 27.5 332.2 27.5 332.5 27.4 332.9 27.4 333.2 27.4 333.6 27.4 333.9 27.3 334.3 27.3 334.6 27.3 335.0 27.3 335.3 27.3 335.7 27.3 336.0 27.3 336.4 27.3 336.7 27.3 337.1 27.3 337.4 27.3 337.8 27.3 338.1 27.3 338.5 27.3 338.8 27.3 339.2 27.3 339.5 27.3 339.9 27.3 340.2 27.3 340.6 27.2 340.9 27.2 341.3 27.1 341.6 27.1 342.0 27.0 342.3 27.0 342.7 26.9 343.0 26.8 343.4 26.8 343.7 26.7 344.1 26.7 344.4 26.6 344.8 26.6 345.1 26.6 345.5 26.6 345.8 26.6 346.2 26.6 346.5 26.6 346.9 26.6 347.2 26.7 347.6 26.7 347.9 26.8 348.3 26.9 348.6 27.0 349.0 27.1 349.3 27.2 349.7 27.3 350.0 27.5 350.4 27.6 350.7 27.8 351.1 28.0 351.4 28.2 351.8 28.5 352.1 28.8 352.5 29.1 352.8 29.5 353.2 29.9 353.5 30.3 353.9 30.7 354.2 31.2 354.6 31.7 354.9 32.3 355.3 33.0 355.6 33.6 356.0 34.4 356.3 35.1 356.7 36.0 357.0 36.8 357.4 37.7 357.7 38.7 358.1 39.7 358.4 40.8 358.8 41.9 359.1 43.1 359.5 44.3 359.8 45.6 360.2 47.0 360.5 48.3 360.9 49.8 361.2 51.2 361.6 52.8 361.9 54.3 362.3 55.9 362.6 57.5 363.0 59.1 363.3 60.7 363.7 62.3 364.0 63.9 364.4 65.5 364.7 67.1 365.1 68.8 365.4 70.4 365.8 72.2 366.1 73.9 366.5 75.7 366.8 77.5 367.2 79.4 367.5 81.5 367.9 83.6 368.2 85.9 368.6 88.3 368.9 91.0 369.3 94.0 369.6 97.4 370.0 100.9 370.3 104.5 370.7 107.9 371.0 111.0 371.4 113.8 371.7 116.4 372.1 118.8 372.4 121.1 372.8 123.4 373.1 125.6 373.5 127.9 373.8 130.1 374.2 132.5 374.5 134.9 374.9 137.3 375.2 139.7 375.6 142.1 375.9 144.4 376.3 146.5 376.6 148.6 377.0 150.6 377.3 152.5 377.7 154.3 378.0 155.9 378.4 157.4 378.7 158.6 379.1 159.7 379.4 160.7 379.8 161.6 380.1 162.4 380.5 163.2 380.8 163.9 381.2 164.5 381.5 165.2 381.9 165.8 382.2 166.4 382.6 167.1 382.9 167.7 383.3 168.3 383.6 168.9 384.0 169.5 384.3 170.1 384.7 170.7 385.0 171.3 385.4 171.9 385.7 172.5 386.1 173.1 386.4 173.8 386.8 174.4 387.1 175.1 387.5 175.7 387.8 176.4 388.2 177.1 388.5 177.8 388.9 178.6 389.2 179.4 389.6 180.3 389.9 181.2 390.3 182.2 390.6 183.1 391.0 184.1 391.3 185.1 391.7 186.1 392.0 187.2 392.4 188.2 392.7 189.2 393.1 190.2 393.4 191.2 393.8 192.3 394.1 193.3 394.5 194.3 394.8 195.3 395.2 196.3 395.5 197.3 395.9 198.3 396.2 199.2 396.6 200.1 396.9 200.9 397.3 201.7 397.6 202.5 398.0 203.3 398.3 204.0 398.7 204.7 399.0 205.4 399.4 206.1 399.7 206.8 400.1 207.4 400.4 207.9 400.8 208.4 401.1 208.9 401.5 209.2 401.8 209.5 402.2 209.8 402.5 209.9 402.9 210.0 403.2 210.1 403.6 210.1 403.9 210.1 404.3 210.0 404.6 209.9 405.0 209.8 405.3 209.7 405.7 209.5 406.0 209.3 406.4 209.1 406.7 208.8 407.1 208.4 407.4 207.9 407.8 207.3 408.1 206.6 408.5 206.0 408.8 205.3 409.2 204.6 409.5 203.9 409.9 203.3 410.2 202.7 410.6 202.2 410.9 201.8 411.3 201.5 411.6 201.2 412.0 201.0 412.3 200.7 412.7 200.6 413.0 200.5 413.4 200.4 413.7 200.4 414.1 200.5 414.4 200.6 414.8 200.9 415.1 201.2 415.5 201.7 415.8 202.2 416.2 202.8 416.5 203.4 416.9 204.1 417.2 204.9 417.6 205.7 417.9 206.7 418.3 207.8 418.6 208.9 419.0 210.1 419.3 211.2 419.7 212.3 420.0 213.4 420.4 214.3 420.7 215.3 421.1 216.1 421.4 217.0 421.8 217.8 422.1 218.5 422.5 219.2 422.8 219.9 423.2 220.5 423.5 221.0 423.9 221.5 424.2 221.8 424.6 222.2 424.9 222.4 425.3 222.7 425.6 222.9 426.0 223.0 426.3 223.2 426.7 223.3 427.0 223.4 427.4 223.5 427.7 223.6 428.1 223.6 428.4 223.6 428.8 223.5 429.1 223.5 429.5 223.4 429.8 223.2 430.2 223.1 430.5 222.9 430.9 222.7 431.2 222.5 431.6 222.4 431.9 222.2 432.3 222.0 432.6 221.8 433.0 221.7 433.3 221.6 433.7 221.5 434.0 221.4 434.4 221.4 434.7 221.4 435.1 221.4 435.4 221.4 435.8 221.5 436.1 221.5 436.5 221.6 436.8 221.7 437.2 221.8 437.5 221.9 437.9 222.0 438.2 222.1 438.6 222.3 438.9 222.4 439.3 222.5 439.6 222.7 440.0 222.9 440.3 223.0 440.7 223.2 441.0 223.4 441.4 223.6 441.7 223.8 442.1 224.0 442.4 224.2 442.8 224.3 443.1 224.5 443.5 224.6 443.8 224.8 444.2 224.9 444.5 224.9 444.9 225.0 445.2 225.0 445.6 225.0 445.9 225.0 446.3 224.9 446.6 224.7 447.0 224.6 447.3 224.4 447.7 224.2 448.0 223.9 448.4 223.6 448.7 223.4 449.1 223.0 449.4 222.7 449.8 222.4 450.1 222.0 450.5 221.7 450.8 221.3 451.2 221.0 451.5 220.6 451.9 220.1 452.2 219.7 452.6 219.3 452.9 218.9 453.3 218.5 453.6 218.1 454.0 217.7 454.3 217.4 454.7 217.1 455.0 216.9 455.4 216.7 455.7 216.6 456.1 216.6 456.4 216.7 456.8 216.8 457.1 217.0 457.5 217.3 457.8 217.6 458.2 218.0 458.5 218.4 458.9 218.8 459.2 219.2 459.6 219.7 459.9 220.1 460.3 220.5 460.6 221.0 461.0 221.4 461.3 221.9 461.7 222.3 462.0 222.8 462.4 223.2 462.7 223.6 463.1 223.9 463.4 224.2 463.8 224.4 464.1 224.5 464.5 224.6 464.8 224.6 465.2 224.5 465.5 224.3 465.9 224.1 466.2 223.8 466.6 223.5 466.9 223.2 467.3 222.9 467.6 222.5 468.0 222.1 468.3 221.7 468.7 221.3 469.0 220.9 469.4 220.5 469.7 220.1 470.1 219.7 470.4 219.3 470.8 218.8 471.1 218.4 471.5 217.9 471.8 217.5 472.2 217.1 472.5 216.6 472.9 216.2 473.2 215.8 473.6 215.4 473.9 215.0 474.3 214.7 474.6 214.3 475.0 214.0 475.3 213.6 475.7 213.3 476.0 212.9 476.4 212.6 476.7 212.3 477.1 211.9 477.4 211.6 477.8 211.3 478.1 211.0 478.5 210.7 478.8 210.4 479.2 210.1 479.5 209.8 479.9 209.6 480.2 209.3 480.6 209.0 480.9 208.7 481.3 208.5 481.6 208.2" stroke="#ff3c3c" opacity="0.9"/>
</g>
<path d="M198.85 18.70V240.40" stroke="#ff5a5a" stroke-width="1.00" opacity="0.75"/>
<path d="M245.47 18.70V240.40" stroke="#ff5a5a" stroke-width="1.00" opacity="0.75"/>
<path d="M292.37 18.70V240.40" stroke="#ff5a5a" stroke-width="1.00" opacity="0.75"/>
<path d="M339.27 18.70V240.40" stroke="#ff5a5a" stroke-width="1.00" opacity="0.75"/>
<rect x="179.30" y="23.80" width="39.70" height="5.90" fill="#ffff1e" />
<rect x="197.55" y="19.70" width="2.60" height="2.60" fill="#ffee00" />
<text x="199.15" y="28.65" font-size="5.20" fill="#1c1c1c" text-anchor="middle" textLength="36.70" lengthAdjust="spacingAndGlyphs" stroke="#1c1c1c" stroke-width="0.08">1558.195 ( 0.49)</text>
<rect x="226.00" y="17.20" width="39.00" height="6.00" fill="#ffff1e" />
<rect x="244.17" y="25.70" width="2.60" height="2.60" fill="#ffee00" />
<text x="245.50" y="22.10" font-size="5.20" fill="#1c1c1c" text-anchor="middle" textLength="36.00" lengthAdjust="spacingAndGlyphs" stroke="#1c1c1c" stroke-width="0.08">1559.005 ( 0.49)</text>
<rect x="273.00" y="16.20" width="38.20" height="6.20" fill="#ffff1e" />
<rect x="291.07" y="24.90" width="2.60" height="2.60" fill="#ffee00" />
<text x="292.10" y="21.20" font-size="5.20" fill="#1c1c1c" text-anchor="middle" textLength="35.20" lengthAdjust="spacingAndGlyphs" stroke="#1c1c1c" stroke-width="0.08">1559.820 ( 0.48)</text>
<rect x="319.50" y="17.20" width="39.00" height="6.10" fill="#ffff1e" />
<rect x="337.97" y="26.00" width="2.60" height="2.60" fill="#ffee00" />
<text x="339.00" y="22.15" font-size="5.20" fill="#1c1c1c" text-anchor="middle" textLength="36.00" lengthAdjust="spacingAndGlyphs" stroke="#1c1c1c" stroke-width="0.08">1560.635 ( 0.49)</text>
<path d="M68.5 19.3V243.2M62.9 240.4H481.5" stroke="#505050" stroke-width="0.7" fill="none"/>
<path d="M62.9 28.75H68.5M62.9 49.91H68.5M62.9 71.08H68.5M62.9 92.25H68.5M62.9 113.41H68.5M62.9 134.57H68.5M62.9 155.74H68.5M62.9 176.91H68.5M62.9 198.07H68.5M62.9 219.23H68.5M68.50 240.4V243.2M126.05 240.4V243.2M183.60 240.4V243.2M241.15 240.4V243.2M298.70 240.4V243.2M356.25 240.4V243.2M413.80 240.4V243.2M471.35 240.4V243.2" stroke="#4a4a4a" stroke-width="0.7" fill="none"/>
<text x="45.95 48.58 52.16 54.98 58.18" y="30.95" font-size="6.88" fill="#2e2e2e" class="c" stroke="#2e2e2e" stroke-width="0.07" >-2.13</text>
<text x="42.75 45.38 48.96 51.78 54.98 58.18" y="52.12" font-size="6.88" fill="#2e2e2e" class="c" stroke="#2e2e2e" stroke-width="0.07" >-6.917</text>
<text x="39.55 42.18 45.38 48.96 51.78 54.98 58.18" y="73.28" font-size="6.88" fill="#2e2e2e" class="c" stroke="#2e2e2e" stroke-width="0.07" >-11.704</text>
<text x="39.55 42.18 45.38 48.96 51.78 54.98 58.18" y="94.45" font-size="6.88" fill="#2e2e2e" class="c" stroke="#2e2e2e" stroke-width="0.07" >-16.491</text>
<text x="39.55 42.18 45.38 48.96 51.78 54.98 58.18" y="115.61" font-size="6.88" fill="#2e2e2e" class="c" stroke="#2e2e2e" stroke-width="0.07" >-21.278</text>
<text x="39.55 42.18 45.38 48.96 51.78 54.98 58.18" y="136.77" font-size="6.88" fill="#2e2e2e" class="c" stroke="#2e2e2e" stroke-width="0.07" >-26.065</text>
<text x="39.55 42.18 45.38 48.96 51.78 54.98 58.18" y="157.94" font-size="6.88" fill="#2e2e2e" class="c" stroke="#2e2e2e" stroke-width="0.07" >-30.852</text>
<text x="39.55 42.18 45.38 48.96 51.78 54.98 58.18" y="179.10" font-size="6.88" fill="#2e2e2e" class="c" stroke="#2e2e2e" stroke-width="0.07" >-35.639</text>
<text x="39.55 42.18 45.38 48.96 51.78 54.98 58.18" y="200.27" font-size="6.88" fill="#2e2e2e" class="c" stroke="#2e2e2e" stroke-width="0.07" >-40.426</text>
<text x="39.55 42.18 45.38 48.96 51.78 54.98 58.18" y="221.43" font-size="6.88" fill="#2e2e2e" class="c" stroke="#2e2e2e" stroke-width="0.07" >-45.213</text>
<text x="52.35 54.98 58.18" y="242.60" font-size="6.88" fill="#2e2e2e" class="c" stroke="#2e2e2e" stroke-width="0.07" >-50</text>
<text x="68.80" y="249.40" font-size="5.85" fill="#262626" text-anchor="middle" >1555.93</text>
<text x="126.35" y="249.40" font-size="5.85" fill="#262626" text-anchor="middle" >1556.93</text>
<text x="183.90" y="249.40" font-size="5.85" fill="#262626" text-anchor="middle" >1557.93</text>
<text x="241.45" y="249.40" font-size="5.85" fill="#262626" text-anchor="middle" >1558.93</text>
<text x="299.00" y="249.40" font-size="5.85" fill="#262626" text-anchor="middle" >1559.93</text>
<text x="356.55" y="249.40" font-size="5.85" fill="#262626" text-anchor="middle" >1560.93</text>
<text x="414.10" y="249.40" font-size="5.85" fill="#262626" text-anchor="middle" >1561.93</text>
<text x="471.65" y="249.40" font-size="5.85" fill="#262626" text-anchor="middle" >1562.93</text>
<text x="274.80" y="259.60" font-size="5.40" fill="#777" text-anchor="middle" >WL</text>
<text transform="translate(26.8,133) rotate(-90)" font-size="5.4" fill="#777">Pv</text>
<path d="M505.70 23.90H516.00" stroke="#ff3c3c" stroke-width="1.05" />
<text x="518.00" y="25.80" font-size="5.30" fill="#333" >CH1</text>
<path d="M505.70 30.40H516.00" stroke="#228b22" stroke-width="1.05" />
<text x="518.00" y="32.30" font-size="5.30" fill="#333" >CH2</text>
<path d="M505.70 36.90H516.00" stroke="#3434ff" stroke-width="1.05" />
<text x="518.00" y="38.80" font-size="5.30" fill="#333" >CH3</text>
<path d="M505.70 43.40H516.00" stroke="#9acd32" stroke-width="1.05" />
<text x="518.00" y="45.30" font-size="5.30" fill="#333" >CH4</text>
<rect x="555.20" y="11.30" width="178.60" height="135.90" fill="#00bfff" />
<rect x="556.10" y="65.60" width="176.80" height="80.30" fill="#00ffff" stroke="#86ecff" stroke-width="0.5"/>
<text x="604.30" y="23.30" font-size="5.75" fill="#0c1820" text-anchor="end" class="k" textLength="25.6" lengthAdjust="spacing">供 应 商:</text>
<text x="604.30" y="39.90" font-size="5.75" fill="#0c1820" text-anchor="end" class="k" textLength="25.6" lengthAdjust="spacing">产品名称:</text>
<text x="604.30" y="56.20" font-size="5.75" fill="#0c1820" text-anchor="end" class="k" textLength="25.6" lengthAdjust="spacing">产品序号:</text>
<rect x="610.80" y="15.90" width="120.40" height="10.10" fill="#ffffff" />
<text x="612.30" y="23.20" font-size="7.80" fill="#1a1a1a" class="m" textLength="22.48" lengthAdjust="spacingAndGlyphs"  stroke="#1a1a1a" stroke-width="0.10">Joinwit</text>
<rect x="610.80" y="32.70" width="120.40" height="10.10" fill="#ffffff" />
<text x="612.30" y="40.00" font-size="7.80" fill="#1a1a1a" class="m" textLength="12.76" lengthAdjust="spacingAndGlyphs"  stroke="#1a1a1a" stroke-width="0.10">DWDM</text>
<text x="625.62" y="40.00" font-size="6.97" fill="#1a1a1a" class="c" stroke="#1a1a1a" stroke-width="0.07" >-</text>
<text x="628.50" y="40.00" font-size="7.80" fill="#1a1a1a" class="m" textLength="3.04" lengthAdjust="spacingAndGlyphs"  stroke="#1a1a1a" stroke-width="0.10">M</text>
<text x="632.10 634.76" y="40.00" font-size="6.97" fill="#1a1a1a" class="c" stroke="#1a1a1a" stroke-width="0.07" >-4</text>
<text x="638.22" y="40.00" font-size="7.80" fill="#1a1a1a" class="m" textLength="6.28" lengthAdjust="spacingAndGlyphs"  stroke="#1a1a1a" stroke-width="0.10">CH</text>
<rect x="610.80" y="49.50" width="120.40" height="10.10" fill="#ffffff" />
<text x="612.08 615.32 618.56 621.80 625.04 628.28 631.52 634.76 638.00 641.24 644.48" y="56.40" font-size="6.97" fill="#1a1a1a" class="c" stroke="#1a1a1a" stroke-width="0.07" >12300103001</text>
<path d="M645.00 34.60V41.00" stroke="#222" stroke-width="0.60" />
<text x="587.00" y="78.60" font-size="8.50" fill="#10242c" class="m" textLength="7.70" lengthAdjust="spacingAndGlyphs" font-weight="bold" stroke="#10242c" stroke-width="0.10">CH</text>
<text x="595.0 600.0" y="78.60" font-size="8.3" fill="#10242c" class="c" font-weight="bold" stroke="#10242c" stroke-width="0.2">1:</text>
<text x="624.91 629.01 634.61 639.01 644.01" y="79.00" font-size="10.75" fill="#10242c" class="c" stroke="#10242c" stroke-width="0.07" >-1.25</text>
<text x="669.30" y="77.30" font-size="5.00" fill="#1a3a44" class="m" textLength="8.00" lengthAdjust="spacingAndGlyphs" font-weight="bold" stroke="#1a3a44" stroke-width="0.10">dBm</text>
<rect x="692.5" y="68.10" width="38" height="15.00" rx="1.4" fill="url(#gbtn)" stroke="#8a8a8a" stroke-width="0.6"/>
<text x="711.50" y="77.80" font-size="6.20" fill="#222" text-anchor="middle" class="c"  stroke="#222" stroke-width="0.07">归零</text>
<text x="587.00" y="98.40" font-size="8.50" fill="#10242c" class="m" textLength="7.70" lengthAdjust="spacingAndGlyphs" font-weight="bold" stroke="#10242c" stroke-width="0.10">CH</text>
<text x="595.0 600.0" y="98.40" font-size="8.3" fill="#10242c" class="c" font-weight="bold" stroke="#10242c" stroke-width="0.2">2:</text>
<text x="624.91 629.01 634.61 639.01 644.01" y="98.80" font-size="10.75" fill="#10242c" class="c" stroke="#10242c" stroke-width="0.07" >-1.25</text>
<text x="669.30" y="97.10" font-size="5.00" fill="#1a3a44" class="m" textLength="8.00" lengthAdjust="spacingAndGlyphs" font-weight="bold" stroke="#1a3a44" stroke-width="0.10">dBm</text>
<rect x="692.5" y="87.90" width="38" height="15.20" rx="1.4" fill="url(#gbtn)" stroke="#8a8a8a" stroke-width="0.6"/>
<text x="711.50" y="97.70" font-size="6.20" fill="#222" text-anchor="middle" class="c"  stroke="#222" stroke-width="0.07">归零</text>
<text x="587.00" y="118.20" font-size="8.50" fill="#10242c" class="m" textLength="7.70" lengthAdjust="spacingAndGlyphs" font-weight="bold" stroke="#10242c" stroke-width="0.10">CH</text>
<text x="595.0 600.0" y="118.20" font-size="8.3" fill="#10242c" class="c" font-weight="bold" stroke="#10242c" stroke-width="0.2">3:</text>
<text x="624.91 629.01 634.61 639.01 644.01" y="118.60" font-size="10.75" fill="#10242c" class="c" stroke="#10242c" stroke-width="0.07" >-1.25</text>
<text x="669.30" y="116.90" font-size="5.00" fill="#1a3a44" class="m" textLength="8.00" lengthAdjust="spacingAndGlyphs" font-weight="bold" stroke="#1a3a44" stroke-width="0.10">dBm</text>
<rect x="692.5" y="107.50" width="38" height="15.40" rx="1.4" fill="url(#gbtn)" stroke="#8a8a8a" stroke-width="0.6"/>
<text x="711.50" y="117.40" font-size="6.20" fill="#222" text-anchor="middle" class="c"  stroke="#222" stroke-width="0.07">归零</text>
<text x="587.00" y="138.00" font-size="8.50" fill="#10242c" class="m" textLength="7.70" lengthAdjust="spacingAndGlyphs" font-weight="bold" stroke="#10242c" stroke-width="0.10">CH</text>
<text x="595.0 600.0" y="138.00" font-size="8.3" fill="#10242c" class="c" font-weight="bold" stroke="#10242c" stroke-width="0.2">4:</text>
<text x="624.91 629.01 634.61 639.01 644.01" y="138.40" font-size="10.75" fill="#10242c" class="c" stroke="#10242c" stroke-width="0.07" >-1.25</text>
<text x="669.30" y="136.70" font-size="5.00" fill="#1a3a44" class="m" textLength="8.00" lengthAdjust="spacingAndGlyphs" font-weight="bold" stroke="#1a3a44" stroke-width="0.10">dBm</text>
<rect x="692.5" y="127.50" width="38" height="15.60" rx="1.4" fill="url(#gbtn)" stroke="#8a8a8a" stroke-width="0.6"/>
<text x="711.50" y="137.50" font-size="6.20" fill="#222" text-anchor="middle" class="c"  stroke="#222" stroke-width="0.07">归零</text>
<rect x="556.10" y="160.00" width="177.40" height="109.20" fill="#ffffff" stroke="#a4a4a4" stroke-width="0.6"/>
<rect x="557.90" y="161.20" width="174.00" height="106.50" fill="#00bfff" />
<path d="M556.1 160.3V149.8H578.6V160.3" fill="#fff" stroke="#9a9a9a" stroke-width="0.6"/>
<rect x="556.50" y="159.60" width="21.80" height="1.40" fill="#ffffff" />
<path d="M578.9 159.7V151.2H600V159.7" fill="#ececec" stroke="#9a9a9a" stroke-width="0.6"/>
<text x="564.30" y="156.90" font-size="5.90" fill="#222" text-anchor="middle" class="c"  stroke="#222" stroke-width="0.07">测试</text>
<text x="586.30" y="157.70" font-size="5.90" fill="#222" text-anchor="middle" class="c"  stroke="#222" stroke-width="0.07">配置</text>
<text x="611.20" y="170.90" font-size="5.75" fill="#0c1820" text-anchor="end" class="k" textLength="26.0" lengthAdjust="spacing">起始波长:</text>
<rect x="617.00" y="164.20" width="30.50" height="9.50" fill="#ffffff" />
<text x="618.29 621.29 624.29 627.29" y="170.60" font-size="6.45" fill="#1a1a1a" class="c" stroke="#1a1a1a" stroke-width="0.07" >1550</text>
<text x="611.20" y="186.62" font-size="5.75" fill="#0c1820" text-anchor="end" class="k" textLength="26.0" lengthAdjust="spacing">结束波长:</text>
<rect x="617.00" y="179.92" width="30.50" height="9.50" fill="#ffffff" />
<text x="618.29 621.29 624.29 627.29" y="186.32" font-size="6.45" fill="#1a1a1a" class="c" stroke="#1a1a1a" stroke-width="0.07" >1570</text>
<text x="611.20" y="202.34" font-size="5.75" fill="#0c1820" text-anchor="end" class="k" textLength="26.0" lengthAdjust="spacing">输出功率:</text>
<rect x="617.00" y="195.64" width="30.50" height="9.50" fill="#ffffff" />
<text x="618.29" y="202.04" font-size="6.45" fill="#1a1a1a" class="c" stroke="#1a1a1a" stroke-width="0.07" >1</text>
<text x="611.20" y="218.06" font-size="5.75" fill="#0c1820" text-anchor="end" class="k" textLength="14.2" lengthAdjust="spacing">步进:</text>
<rect x="617.00" y="211.36" width="30.50" height="9.50" fill="#ffffff" />
<text x="618.29 621.64 624.29 627.29" y="217.76" font-size="6.45" fill="#1a1a1a" class="c" stroke="#1a1a1a" stroke-width="0.07" >0.01</text>
<rect x="672.30" y="166.20" width="5.60" height="5.60" fill="#f4f4f4" stroke="#8c9aa4" stroke-width="0.6"/>
<path d="M673.40 169.20l1.3 1.5l2.1 -3.2" stroke="#3a4aa0" stroke-width="0.9" fill="none"/>
<text x="680.50" y="171.20" font-size="6.98" fill="#14222c" class="m" textLength="8.50" lengthAdjust="spacingAndGlyphs"  stroke="#14222c" stroke-width="0.10">Cal</text>
<rect x="672.10" y="228.70" width="5.60" height="5.60" fill="#f4f4f4" stroke="#8c9aa4" stroke-width="0.6"/>
<text x="680.30" y="233.70" font-size="7.46" fill="#14222c" class="m" textLength="6.00" lengthAdjust="spacingAndGlyphs"  stroke="#14222c" stroke-width="0.10">IL</text>
<text x="686.30" y="233.60" font-size="5.60" fill="#0c1820" class="c"  stroke="#0c1820" stroke-width="0.07">标定</text>
<rect x="571.20" y="245.1" width="31.60" height="17.1" rx="1.4" fill="url(#gbtn)" stroke="#8a8a8a" stroke-width="0.6"/>
<text x="587.00" y="255.30" font-size="5.70" fill="#222" text-anchor="middle" class="c"  stroke="#222" stroke-width="0.07">连接设备</text>
<rect x="683.60" y="245.1" width="33.30" height="17.1" rx="1.4" fill="url(#gbtn)" stroke="#8a8a8a" stroke-width="0.6"/>
<text x="700.25" y="255.30" font-size="5.70" fill="#222" text-anchor="middle" class="c"  stroke="#222" stroke-width="0.07">测试</text>
<rect x="555.20" y="278.00" width="178.30" height="112.30" fill="#afeeee" stroke="#b2b2b2" stroke-width="0.7"/>
<rect x="553.90" y="390.70" width="180.80" height="4.10" fill="#f0f0f0" />
<text x="556.70 559.47 562.24 565.01 568.44 570.55 573.98 576.09 578.86 582.37 584.40 587.17 590.60 592.71 595.48 598.91 601.02 603.79" y="283.70" font-size="5.96" fill="#1c2c2c" class="c" stroke="#1c2c2c" stroke-width="0.07" >2025/1/14 16:01:34</text>
<text x="609.43" y="283.60" font-size="5.00" fill="#1c2c2c" class="c" textLength="22.16" lengthAdjust="spacingAndGlyphs"  stroke="#1c2c2c" stroke-width="0.07">测试通带</text>
<text x="632.15 635.00 637.03 640.13 642.57" y="283.70" font-size="5.96" fill="#1c2c2c" class="c" stroke="#1c2c2c" stroke-width="0.07" >: 0.1</text>
<text x="645.54" y="283.70" font-size="6.67" fill="#1c2c2c" class="m" textLength="5.34" lengthAdjust="spacingAndGlyphs"  stroke="#1c2c2c" stroke-width="0.10">nm</text>
<text x="556.70 559.47 562.24 565.01 568.44 570.55 573.98 576.09 578.86 582.37 584.40 587.17 590.60 592.71 595.48 598.91 601.02 603.79" y="289.00" font-size="5.96" fill="#1c2c2c" class="c" stroke="#1c2c2c" stroke-width="0.07" >2025/1/14 16:01:34</text>
<text x="609.43" y="288.90" font-size="5.00" fill="#1c2c2c" class="c" textLength="22.16" lengthAdjust="spacingAndGlyphs"  stroke="#1c2c2c" stroke-width="0.07">测试波长</text>
<text x="632.15 635.00 637.03 639.80 642.57 645.34 648.44 650.88 653.65 657.16 659.19 661.96 664.73 667.50 670.60 673.04 675.81 679.32 681.35 684.12 686.89 689.66 692.76 695.20 697.97 701.48 703.51 706.28 709.05 711.82 714.92 717.36 720.13" y="289.00" font-size="5.96" fill="#1c2c2c" class="c" stroke="#1c2c2c" stroke-width="0.07" >: 1560.61 1559.79 1558.98 1558.17</text>
<rect x="1.20" y="274.00" width="551.00" height="119.30" fill="#ffffff" />
<path d="M1.2 393.3V274H552.2" fill="none" stroke="#585858" stroke-width="1.15"/>
<path d="M1.2 393.3H552.2V274" fill="none" stroke="#929292" stroke-width="0.9"/>
<rect x="1.80" y="274.90" width="507.60" height="14.75" fill="#b8860b" />
<rect x="1.80" y="289.65" width="56.60" height="18.30" fill="#3399ff" />
<path d="M58.40 274.90V289.65" stroke="#efe6cc" stroke-width="0.80" />
<path d="M86.40 274.90V289.65" stroke="#efe6cc" stroke-width="0.80" />
<path d="M141.30 274.90V289.65" stroke="#efe6cc" stroke-width="0.80" />
<path d="M196.80 274.90V289.65" stroke="#efe6cc" stroke-width="0.80" />
<path d="M224.50 274.90V289.65" stroke="#efe6cc" stroke-width="0.80" />
<path d="M343.80 274.90V289.65" stroke="#efe6cc" stroke-width="0.80" />
<path d="M399.50 274.90V289.65" stroke="#efe6cc" stroke-width="0.80" />
<path d="M454.60 274.90V289.65" stroke="#efe6cc" stroke-width="0.80" />
<path d="M58.40 289.65V363.20" stroke="#a2a2a2" stroke-width="0.75" />
<path d="M86.40 289.65V363.20" stroke="#a2a2a2" stroke-width="0.75" />
<path d="M141.30 289.65V363.20" stroke="#a2a2a2" stroke-width="0.75" />
<path d="M196.80 289.65V363.20" stroke="#a2a2a2" stroke-width="0.75" />
<path d="M224.50 289.65V363.20" stroke="#a2a2a2" stroke-width="0.75" />
<path d="M343.80 289.65V363.20" stroke="#a2a2a2" stroke-width="0.75" />
<path d="M399.50 289.65V363.20" stroke="#a2a2a2" stroke-width="0.75" />
<path d="M454.60 289.65V363.20" stroke="#a2a2a2" stroke-width="0.75" />
<path d="M509.40 289.65V363.20" stroke="#a2a2a2" stroke-width="0.75" />
<path d="M1.80 307.95H509.75" stroke="#a2a2a2" stroke-width="0.75" />
<path d="M1.80 326.25H509.75" stroke="#a2a2a2" stroke-width="0.75" />
<path d="M1.80 344.55H509.75" stroke="#a2a2a2" stroke-width="0.75" />
<path d="M1.80 362.85H509.75" stroke="#a2a2a2" stroke-width="0.75" />
<text x="29.80" y="284.60" font-size="5.40" fill="#fff" text-anchor="middle" class="c" stroke="#fff" stroke-width="0.12">通道名称</text>
<text x="72.40" y="284.40" font-size="5.25" fill="#fff" text-anchor="middle" >IL-ITU</text>
<text x="113.85" y="284.40" font-size="5.25" fill="#fff" text-anchor="middle" >Min IL @ITU±0.1nm</text>
<text x="169.05" y="284.40" font-size="5.25" fill="#fff" text-anchor="middle" >Max IL @ITU±0.1nm</text>
<text x="210.65" y="284.40" font-size="5.25" fill="#fff" text-anchor="middle" >Ripple</text>
<text x="284.15" y="284.40" font-size="5.25" fill="#fff" text-anchor="middle" >CWL OffSet@1dB</text>
<text x="371.65" y="284.40" font-size="5.25" fill="#fff" text-anchor="middle" >BandWidth@1dB</text>
<text x="427.05" y="284.40" font-size="5.25" fill="#fff" text-anchor="middle" >ADJ @ITU±0.1nm</text>
<text x="482.00" y="284.40" font-size="5.25" fill="#fff" text-anchor="middle" >NADJ @ITU±0.1nm</text>
<text x="2.60" y="302.70" font-size="8.74" fill="#fff" class="m" textLength="7.06" lengthAdjust="spacingAndGlyphs"  stroke="#fff" stroke-width="0.10">CH</text>
<text x="9.62 14.12 16.88 20.51 24.14 27.77 31.83 35.03 38.66" y="302.70" font-size="7.80" fill="#fff" class="c" stroke="#fff" stroke-width="0.07" >1:1560.61</text>
<text x="59.96 64.02 67.22 70.85" y="302.70" font-size="7.80" fill="#2a2a2a" class="c" stroke="#2a2a2a" stroke-width="0.07" >5.59</text>
<text x="87.96 92.02 95.22 98.85" y="302.70" font-size="7.80" fill="#2a2a2a" class="c" stroke="#2a2a2a" stroke-width="0.07" >5.47</text>
<text x="142.86 146.92 150.12 153.75" y="302.70" font-size="7.80" fill="#2a2a2a" class="c" stroke="#2a2a2a" stroke-width="0.07" >5.61</text>
<text x="198.36 202.42 205.62 209.25" y="302.70" font-size="7.80" fill="#2a2a2a" class="c" stroke="#2a2a2a" stroke-width="0.07" >0.14</text>
<text x="226.30" y="302.70" font-size="8.74" fill="#2a2a2a" class="m" textLength="3.43" lengthAdjust="spacingAndGlyphs"  stroke="#2a2a2a" stroke-width="0.10">@</text>
<text x="229.69" y="302.70" font-size="7.80" fill="#2a2a2a" class="c" stroke="#2a2a2a" stroke-width="0.07" >1</text>
<text x="233.56" y="302.70" font-size="8.74" fill="#2a2a2a" class="m" textLength="7.06" lengthAdjust="spacingAndGlyphs"  stroke="#2a2a2a" stroke-width="0.10">dB</text>
<text x="241.24 244.21 247.84 251.47 255.10 259.16 262.36 265.99 269.62 273.91 277.86" y="302.70" font-size="7.80" fill="#2a2a2a" class="c" stroke="#2a2a2a" stroke-width="0.07" >[1560.635] </text>
<text x="280.75" y="302.70" font-size="8.74" fill="#2a2a2a" class="m" textLength="21.58" lengthAdjust="spacingAndGlyphs"  stroke="#2a2a2a" stroke-width="0.10">offset</text>
<text x="302.43" y="302.70" font-size="7.20" fill="#2a2a2a" class="c"  stroke="#2a2a2a" stroke-width="0.07">，</text>
<text x="310.55 314.61 317.81 321.44" y="302.70" font-size="7.80" fill="#2a2a2a" class="c" stroke="#2a2a2a" stroke-width="0.07" >0.03</text>
<text x="345.36 349.42 352.62 356.25" y="302.70" font-size="7.80" fill="#2a2a2a" class="c" stroke="#2a2a2a" stroke-width="0.07" >0.49</text>
<text x="401.06 404.69 408.75 411.95 415.58" y="302.70" font-size="7.80" fill="#2a2a2a" class="c" stroke="#2a2a2a" stroke-width="0.07" >48.38</text>
<text x="456.16 459.79 463.85 467.05 470.68" y="302.70" font-size="7.80" fill="#2a2a2a" class="c" stroke="#2a2a2a" stroke-width="0.07" >49.07</text>
<text x="2.60" y="321.00" font-size="8.74" fill="#2a2a2a" class="m" textLength="7.06" lengthAdjust="spacingAndGlyphs"  stroke="#2a2a2a" stroke-width="0.10">CH</text>
<text x="9.62 14.12 16.88 20.51 24.14 27.77 31.83 35.03 38.66" y="321.00" font-size="7.80" fill="#2a2a2a" class="c" stroke="#2a2a2a" stroke-width="0.07" >2:1559.79</text>
<text x="59.96 64.02 67.22 70.85" y="321.00" font-size="7.80" fill="#2a2a2a" class="c" stroke="#2a2a2a" stroke-width="0.07" >4.83</text>
<text x="87.96 92.02 95.22 98.85" y="321.00" font-size="7.80" fill="#2a2a2a" class="c" stroke="#2a2a2a" stroke-width="0.07" >4.69</text>
<text x="142.86 146.92 150.12 153.75" y="321.00" font-size="7.80" fill="#2a2a2a" class="c" stroke="#2a2a2a" stroke-width="0.07" >4.87</text>
<text x="198.36 202.42 205.62 209.25" y="321.00" font-size="7.80" fill="#2a2a2a" class="c" stroke="#2a2a2a" stroke-width="0.07" >0.18</text>
<text x="226.30" y="321.00" font-size="8.74" fill="#2a2a2a" class="m" textLength="3.43" lengthAdjust="spacingAndGlyphs"  stroke="#2a2a2a" stroke-width="0.10">@</text>
<text x="229.69" y="321.00" font-size="7.80" fill="#2a2a2a" class="c" stroke="#2a2a2a" stroke-width="0.07" >1</text>
<text x="233.56" y="321.00" font-size="8.74" fill="#2a2a2a" class="m" textLength="7.06" lengthAdjust="spacingAndGlyphs"  stroke="#2a2a2a" stroke-width="0.10">dB</text>
<text x="241.24 244.21 247.84 251.47 255.10 259.16 262.36 265.99 270.28 274.23" y="321.00" font-size="7.80" fill="#2a2a2a" class="c" stroke="#2a2a2a" stroke-width="0.07" >[1559.82] </text>
<text x="277.12" y="321.00" font-size="8.74" fill="#2a2a2a" class="m" textLength="21.58" lengthAdjust="spacingAndGlyphs"  stroke="#2a2a2a" stroke-width="0.10">offset</text>
<text x="298.80" y="321.00" font-size="7.20" fill="#2a2a2a" class="c"  stroke="#2a2a2a" stroke-width="0.07">，</text>
<text x="306.92 310.98 314.18 317.81" y="321.00" font-size="7.80" fill="#2a2a2a" class="c" stroke="#2a2a2a" stroke-width="0.07" >0.03</text>
<text x="345.36 349.42 352.62 356.25" y="321.00" font-size="7.80" fill="#2a2a2a" class="c" stroke="#2a2a2a" stroke-width="0.07" >0.48</text>
<text x="401.06 404.69 408.75 411.95 415.58" y="321.00" font-size="7.80" fill="#2a2a2a" class="c" stroke="#2a2a2a" stroke-width="0.07" >46.46</text>
<text x="456.16 459.79 463.85 467.05 470.68" y="321.00" font-size="7.80" fill="#2a2a2a" class="c" stroke="#2a2a2a" stroke-width="0.07" >48.94</text>
<text x="2.60" y="339.30" font-size="8.74" fill="#2a2a2a" class="m" textLength="7.06" lengthAdjust="spacingAndGlyphs"  stroke="#2a2a2a" stroke-width="0.10">CH</text>
<text x="9.62 14.12 16.88 20.51 24.14 27.77 31.83 35.03 38.66" y="339.30" font-size="7.80" fill="#2a2a2a" class="c" stroke="#2a2a2a" stroke-width="0.07" >3:1558.98</text>
<text x="59.96 64.02 67.22 70.85" y="339.30" font-size="7.80" fill="#2a2a2a" class="c" stroke="#2a2a2a" stroke-width="0.07" >4.75</text>
<text x="87.96 92.02 95.22 98.85" y="339.30" font-size="7.80" fill="#2a2a2a" class="c" stroke="#2a2a2a" stroke-width="0.07" >4.64</text>
<text x="142.86 146.92 150.12 153.75" y="339.30" font-size="7.80" fill="#2a2a2a" class="c" stroke="#2a2a2a" stroke-width="0.07" >4.77</text>
<text x="198.36 202.42 205.62 209.25" y="339.30" font-size="7.80" fill="#2a2a2a" class="c" stroke="#2a2a2a" stroke-width="0.07" >0.13</text>
<text x="226.30" y="339.30" font-size="8.74" fill="#2a2a2a" class="m" textLength="3.43" lengthAdjust="spacingAndGlyphs"  stroke="#2a2a2a" stroke-width="0.10">@</text>
<text x="229.69" y="339.30" font-size="7.80" fill="#2a2a2a" class="c" stroke="#2a2a2a" stroke-width="0.07" >1</text>
<text x="233.56" y="339.30" font-size="8.74" fill="#2a2a2a" class="m" textLength="7.06" lengthAdjust="spacingAndGlyphs"  stroke="#2a2a2a" stroke-width="0.10">dB</text>
<text x="241.24 244.21 247.84 251.47 255.10 259.16 262.36 265.99 269.62 273.91 277.86" y="339.30" font-size="7.80" fill="#2a2a2a" class="c" stroke="#2a2a2a" stroke-width="0.07" >[1559.005] </text>
<text x="280.75" y="339.30" font-size="8.74" fill="#2a2a2a" class="m" textLength="21.58" lengthAdjust="spacingAndGlyphs"  stroke="#2a2a2a" stroke-width="0.10">offset</text>
<text x="302.43" y="339.30" font-size="7.20" fill="#2a2a2a" class="c"  stroke="#2a2a2a" stroke-width="0.07">，</text>
<text x="310.55 314.61 317.81 321.44" y="339.30" font-size="7.80" fill="#2a2a2a" class="c" stroke="#2a2a2a" stroke-width="0.07" >0.03</text>
<text x="345.36 349.42 352.62 356.25" y="339.30" font-size="7.80" fill="#2a2a2a" class="c" stroke="#2a2a2a" stroke-width="0.07" >0.49</text>
<text x="401.06 404.69 408.75 411.95 415.58" y="339.30" font-size="7.80" fill="#2a2a2a" class="c" stroke="#2a2a2a" stroke-width="0.07" >49.23</text>
<text x="456.16 459.79 463.85 467.05 470.68" y="339.30" font-size="7.80" fill="#2a2a2a" class="c" stroke="#2a2a2a" stroke-width="0.07" >49.87</text>
<text x="2.60" y="357.60" font-size="8.74" fill="#2a2a2a" class="m" textLength="7.06" lengthAdjust="spacingAndGlyphs"  stroke="#2a2a2a" stroke-width="0.10">CH</text>
<text x="9.62 14.12 16.88 20.51 24.14 27.77 31.83 35.03 38.66" y="357.60" font-size="7.80" fill="#2a2a2a" class="c" stroke="#2a2a2a" stroke-width="0.07" >4:1558.17</text>
<text x="59.96 64.02 67.22 70.85" y="357.60" font-size="7.80" fill="#2a2a2a" class="c" stroke="#2a2a2a" stroke-width="0.07" >4.83</text>
<text x="87.96 92.02 95.22 98.85" y="357.60" font-size="7.80" fill="#2a2a2a" class="c" stroke="#2a2a2a" stroke-width="0.07" >4.70</text>
<text x="142.86 146.92 150.12 153.75" y="357.60" font-size="7.80" fill="#2a2a2a" class="c" stroke="#2a2a2a" stroke-width="0.07" >4.85</text>
<text x="198.36 202.42 205.62 209.25" y="357.60" font-size="7.80" fill="#2a2a2a" class="c" stroke="#2a2a2a" stroke-width="0.07" >0.15</text>
<text x="226.30" y="357.60" font-size="8.74" fill="#2a2a2a" class="m" textLength="3.43" lengthAdjust="spacingAndGlyphs"  stroke="#2a2a2a" stroke-width="0.10">@</text>
<text x="229.69" y="357.60" font-size="7.80" fill="#2a2a2a" class="c" stroke="#2a2a2a" stroke-width="0.07" >1</text>
<text x="233.56" y="357.60" font-size="8.74" fill="#2a2a2a" class="m" textLength="7.06" lengthAdjust="spacingAndGlyphs"  stroke="#2a2a2a" stroke-width="0.10">dB</text>
<text x="241.24 244.21 247.84 251.47 255.10 259.16 262.36 265.99 269.62 273.91 277.86" y="357.60" font-size="7.80" fill="#2a2a2a" class="c" stroke="#2a2a2a" stroke-width="0.07" >[1558.195] </text>
<text x="280.75" y="357.60" font-size="8.74" fill="#2a2a2a" class="m" textLength="21.58" lengthAdjust="spacingAndGlyphs"  stroke="#2a2a2a" stroke-width="0.10">offset</text>
<text x="302.43" y="357.60" font-size="7.20" fill="#2a2a2a" class="c"  stroke="#2a2a2a" stroke-width="0.07">，</text>
<text x="310.55 314.61 317.81 321.44" y="357.60" font-size="7.80" fill="#2a2a2a" class="c" stroke="#2a2a2a" stroke-width="0.07" >0.03</text>
<text x="345.36 349.42 352.62 356.25" y="357.60" font-size="7.80" fill="#2a2a2a" class="c" stroke="#2a2a2a" stroke-width="0.07" >0.49</text>
<text x="401.06 404.69 408.75 411.95 415.58" y="357.60" font-size="7.80" fill="#2a2a2a" class="c" stroke="#2a2a2a" stroke-width="0.07" >40.33</text>
<text x="456.16 459.79 463.85 467.05 470.68" y="357.60" font-size="7.80" fill="#2a2a2a" class="c" stroke="#2a2a2a" stroke-width="0.07" >48.81</text>
</svg>
</body>
</html>
